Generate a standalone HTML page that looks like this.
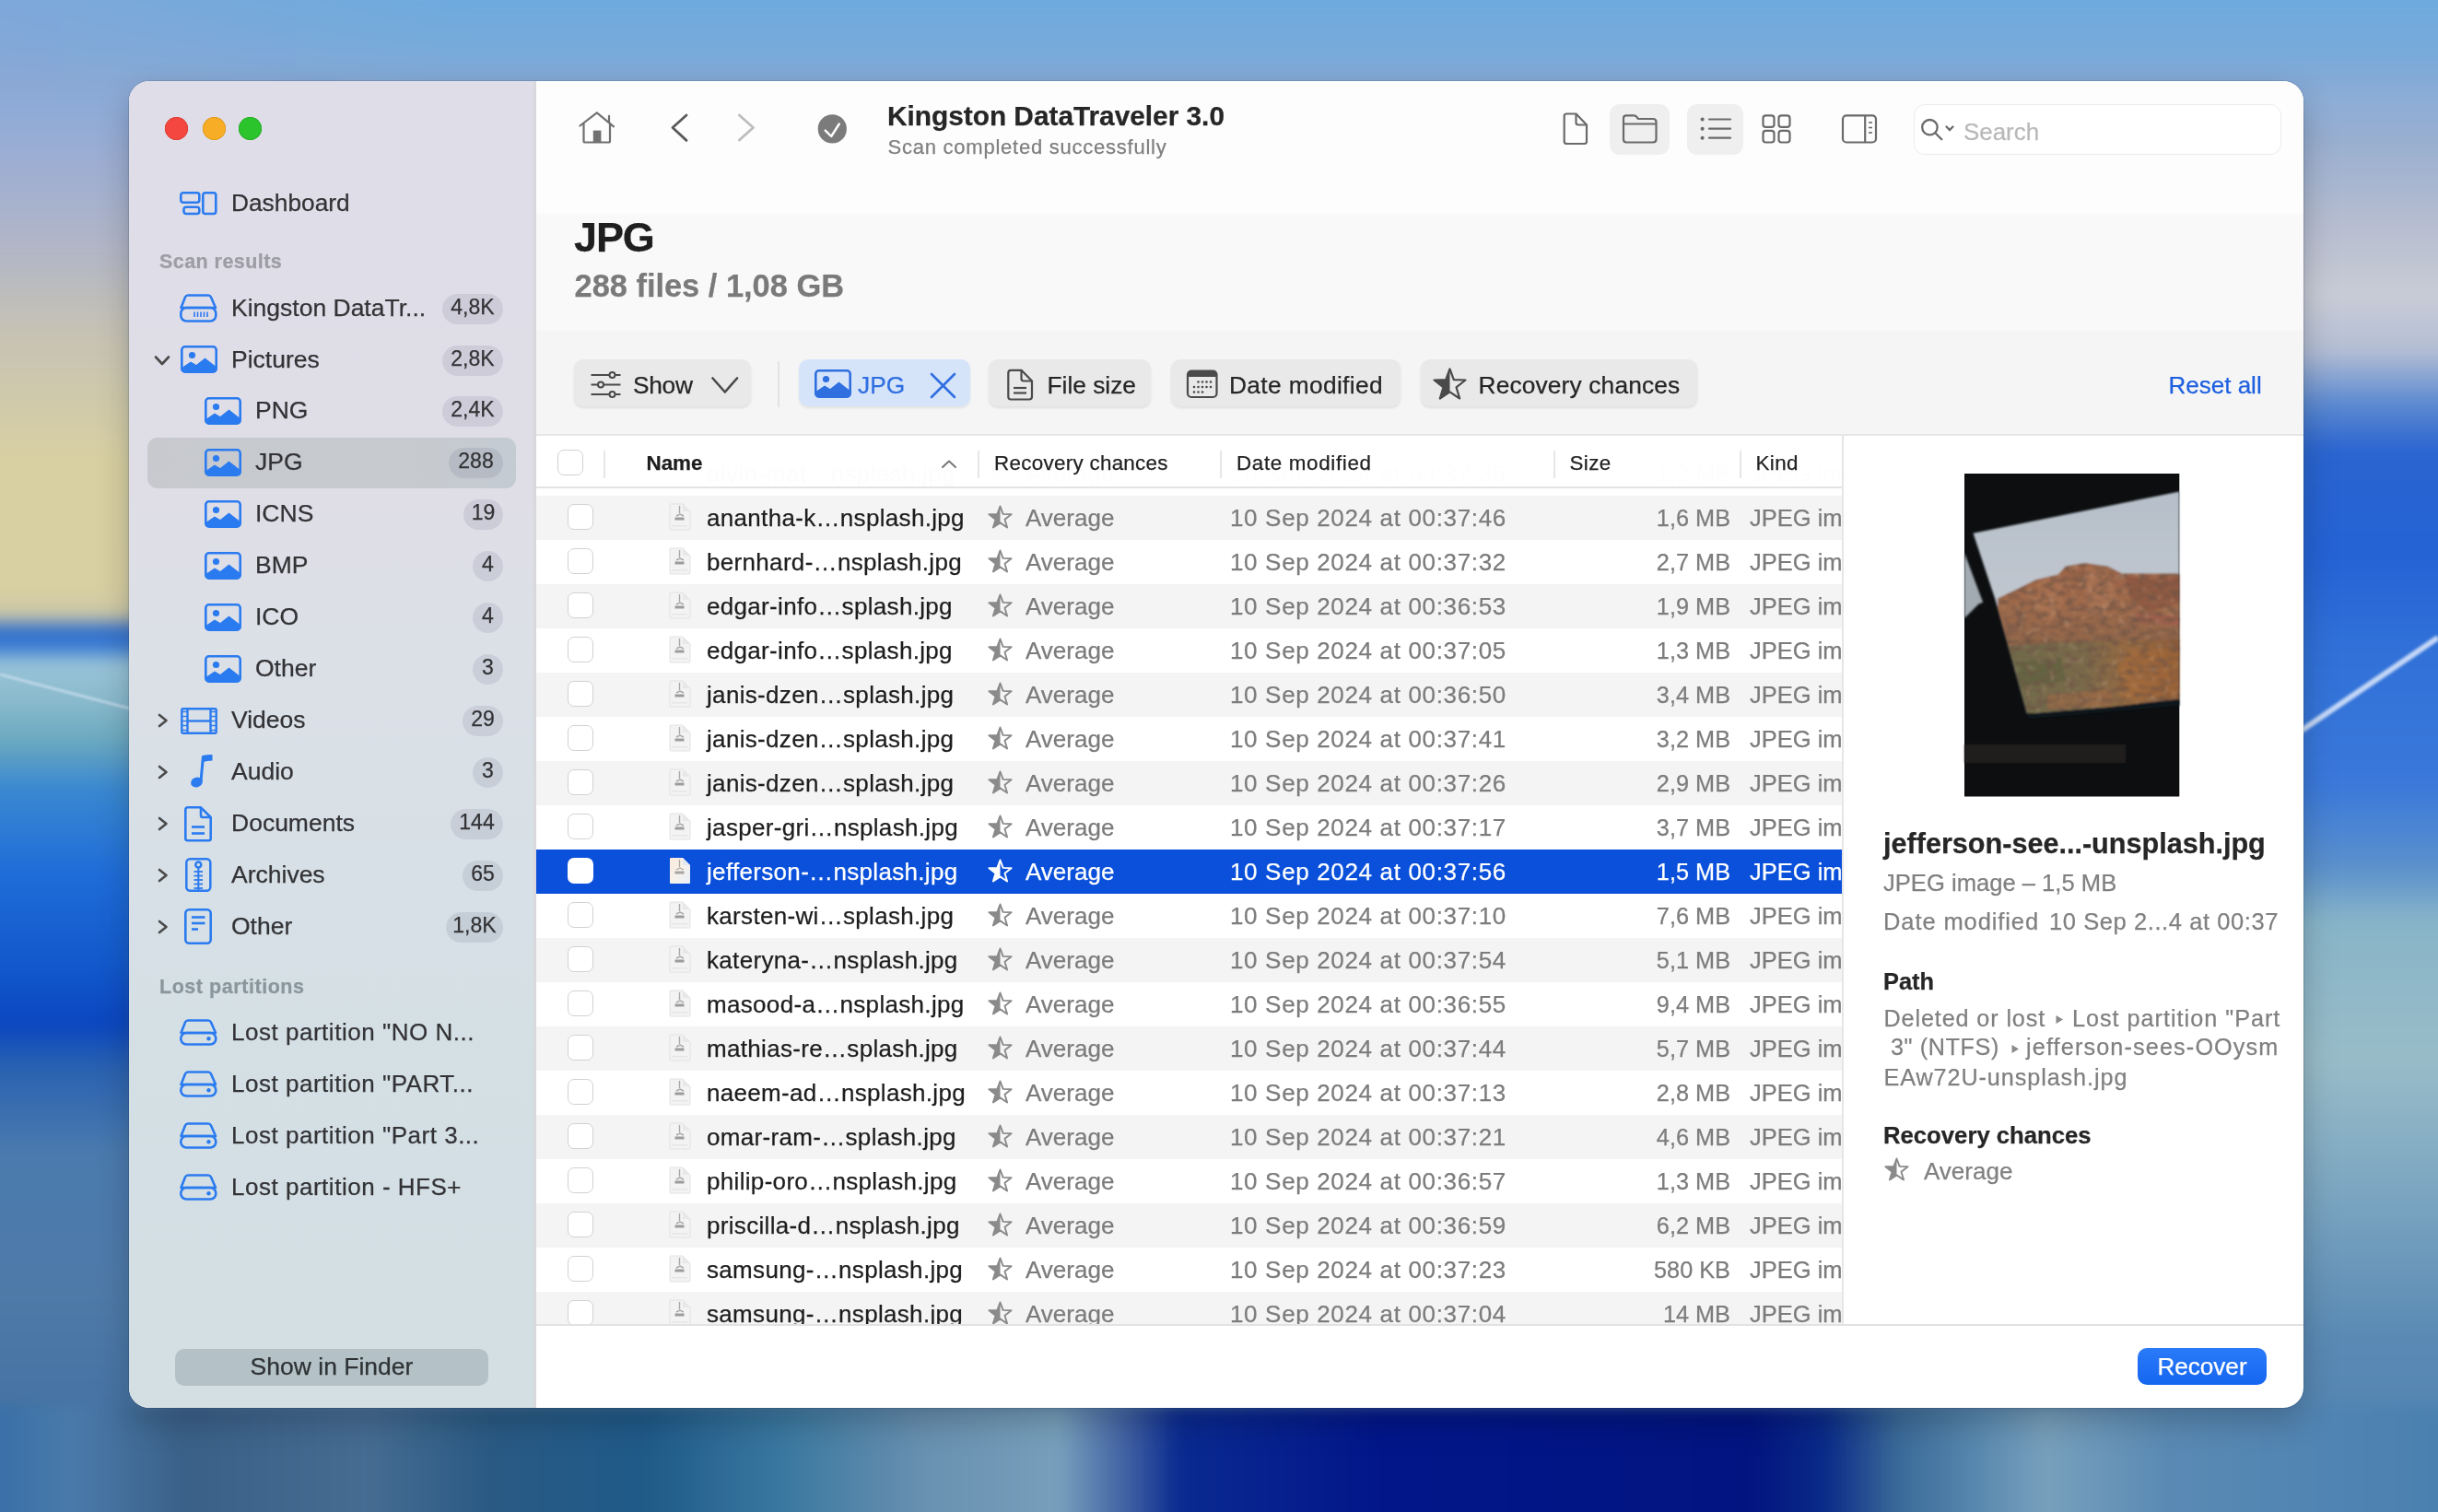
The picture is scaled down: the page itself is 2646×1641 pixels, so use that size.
<!DOCTYPE html>
<html><head><meta charset="utf-8">
<style>
html,body{margin:0;padding:0;width:2646px;height:1641px;overflow:hidden;}
body{position:relative;font-family:"Liberation Sans", sans-serif;background:#5a86b8;-webkit-font-smoothing:antialiased;}
.t{-webkit-text-stroke:0.25px currentColor;}
.b{position:absolute;}
.t{position:absolute;white-space:pre;}
svg.b{overflow:visible}
</style></head><body><div style="position:absolute;left:0;top:0;width:2646px;height:1641px;will-change:transform;">
<div class="b" style="left:-200px;top:-200px;width:3046px;height:2041px;filter:blur(8px);overflow:hidden;">
<div class="b" style="left:0px;top:0px;width:3046px;height:2041px;background:#5a86b8;"></div>
<div class="b" style="left:0px;top:0px;width:3046px;height:330px;background:linear-gradient(180deg,#6eaae0 0px,#6eaade 200px,#76aadb 250px,#88aad4 300px,#8ea8cc 330px);"></div>
<div class="b" style="left:0px;top:0px;width:700px;height:330px;background:linear-gradient(90deg,rgba(150,165,210,0.55),rgba(150,165,210,0));"></div>
<div class="b" style="left:0px;top:300px;width:350px;height:1541px;background:linear-gradient(180deg,#8aaad8 0px,#9eaed2 80px,#b2b6c6 170px,#c6c2b4 260px,#d8d0a2 400px,#d8cfa2 540px,#cbc6a6 568px,#2e6ccc 584px,#3a7cd4 602px,#9ac4d8 620px,#8abacc 660px,#6aa8c0 705px,#3a88d0 755px,#1e6cd8 850px,#1258cc 950px,#0a46c0 1010px,#2a62b0 1060px,#4a7aae 1150px,#4e7aa8 1300px,#3e6c9e 1541px);"></div>
<div class="b" style="left:2690px;top:300px;width:356px;height:1541px;background:linear-gradient(180deg,#8aaed8 0px,#98aed0 50px,#b8bed0 150px,#c8ccd6 220px,#b4bed4 280px,#5a88d0 340px,#2a64d0 390px,#2462d4 500px,#3070d8 600px,#3a78da 750px,#5a90cc 840px,#88b4c8 900px,#98bcc8 1050px,#7aa4c0 1200px,#5a8ab4 1350px,#4e80ae 1541px);"></div>
<div class="b" style="left:0px;top:1725px;width:3046px;height:316px;background:linear-gradient(90deg,#3a70a8 0px,#3a70a8 200px,#4a7aaa 280px,#3a6088 400px,#466c92 600px,#2a5a84 730px,#1f5a88 900px,#3a78a0 1050px,#6890b0 1200px,#78a0bc 1350px,#3a5aa0 1430px,#0a2a90 1480px,#02168a 1700px,#021480 2100px,#0a2a88 2180px,#3a6a98 2260px,#5a8ab0 2350px,#78a0bc 2420px,#5a8ab4 2550px,#4a80b0 2846px);"></div>
</div>
<svg class="b" style="left:2480px;top:640px;" width="166" height="200" viewBox="0 0 166 200"><line x1="0" y1="165" x2="166" y2="52" stroke="rgba(235,242,255,0.8)" stroke-width="6" style="filter:blur(1.5px)"/></svg>
<svg class="b" style="left:0px;top:700px;" width="160" height="100" viewBox="0 0 160 100"><line x1="0" y1="32" x2="160" y2="74" stroke="rgba(220,235,250,0.55)" stroke-width="3" style="filter:blur(1px)"/></svg>
<div class="b" style="left:140px;top:88px;width:2360px;height:1440px;border-radius:22px;box-shadow:0 14px 36px rgba(0,0,0,0.22),0 0 0 1px rgba(0,0,0,0.10);"></div>
<div class="b" style="left:140px;top:88px;width:2360px;height:1440px;border-radius:22px;background:#ffffff;overflow:hidden;"></div>
<div class="b" style="left:140px;top:88px;width:442px;height:1440px;border-top-left-radius:22px;border-bottom-left-radius:22px;background:linear-gradient(180deg,#dfdde8 0px,#dfdee7 450px,#dbe0e7 650px,#d6e0e6 900px,#d3dfe4 1200px,#d3dfe3 1440px);"></div>
<div class="b" style="left:579px;top:88px;width:3px;height:1440px;background:#d9d9dd;"></div>
<div class="b" style="left:179.3px;top:127.0px;width:25px;height:25px;border-radius:50%;background:#f4473f;box-shadow:inset 0 0 0 0.8px #d83a33;"></div>
<div class="b" style="left:219.5px;top:127.0px;width:25px;height:25px;border-radius:50%;background:#f7ad25;box-shadow:inset 0 0 0 0.8px #dc961c;"></div>
<div class="b" style="left:259.3px;top:127.0px;width:25px;height:25px;border-radius:50%;background:#2cc42c;box-shadow:inset 0 0 0 0.8px #22a824;"></div>
<svg class="b" style="left:195px;top:208px;" width="41" height="25" viewBox="0 0 41 25"><g fill="none" stroke="#2b7bf0" stroke-width="2.6">
<rect x="1.3" y="1.3" width="20" height="10.5" rx="2.5"/>
<rect x="4.5" y="16.8" width="16.8" height="7.2" rx="2.5"/>
<rect x="25.3" y="1.3" width="14" height="22.7" rx="2.5"/></g></svg>
<div class="t " style="left:251px;top:205.80px;font-size:26.3px;line-height:29.38px;color:#333336;">Dashboard</div>
<div class="t " style="left:173px;top:272.14px;font-size:21.5px;line-height:24.02px;color:#9d9da6;font-weight:bold;letter-spacing:0.45px;">Scan results</div>
<div class="b" style="left:160px;top:475px;width:400px;height:55px;border-radius:11px;background:linear-gradient(90deg,#c7c9ce 0%,#c6cacf 80%,#c3cbd3 100%);"></div>
<svg class="b" style="left:195px;top:318px;" width="41" height="32" viewBox="0 0 41 32"><g fill="none" stroke="#2b7bf0" stroke-width="2.6" stroke-linejoin="round">
<path d="M9 2.5 H31 Q33 2.5 34 4.5 L39 16 H1.5 L6 4.5 Q7 2.5 9 2.5 Z"/>
<rect x="1.3" y="16" width="38" height="14.5" rx="6"/></g>
<g stroke="#2b7bf0" stroke-width="1.6"><line x1="16" y1="20.5" x2="16" y2="26"/><line x1="19.5" y1="20.5" x2="19.5" y2="26"/><line x1="23" y1="20.5" x2="23" y2="26"/><line x1="26.5" y1="20.5" x2="26.5" y2="26"/><line x1="30" y1="20.5" x2="30" y2="26"/></g></svg>
<div class="t " style="left:251px;top:320.32px;font-size:26.5px;line-height:29.60px;color:#333336;">Kingston DataTr...</div>
<div class="b" style="left:480px;top:319.0px;width:66px;height:33px;border-radius:16.5px;background:rgba(60,60,90,0.105);"></div>
<div class="t " style="left:480px;top:320.99px;font-size:23px;line-height:25.69px;color:#333336;width:66px;text-align:center;">4,8K</div>
<svg class="b" style="left:167px;top:385px;" width="18" height="13" viewBox="0 0 18 13"><path d="M2 2.5 L9 10 L16 2.5" fill="none" stroke="#4a4a4a" stroke-width="2.6" stroke-linecap="round" stroke-linejoin="round"/></svg>
<svg class="b" style="left:196px;top:375px;" width="40" height="30" viewBox="0 0 40 30"><rect x="1.3" y="1.3" width="37.4" height="27.4" rx="3.5" fill="none" stroke="#2b7bf0" stroke-width="2.6"/>
<circle cx="12.5" cy="10.5" r="3.6" fill="#2b7bf0"/>
<path d="M1.3 24 L11 17.5 L17 21 L26.5 13.5 L38.7 23 V26 Q38.7 28.7 36 28.7 H4 Q1.3 28.7 1.3 26 Z" fill="#2b7bf0"/></svg>
<div class="t " style="left:251px;top:376.32px;font-size:26.5px;line-height:29.60px;color:#333336;">Pictures</div>
<div class="b" style="left:480px;top:375.0px;width:66px;height:33px;border-radius:16.5px;background:rgba(60,60,90,0.105);"></div>
<div class="t " style="left:480px;top:376.99px;font-size:23px;line-height:25.69px;color:#333336;width:66px;text-align:center;">2,8K</div>
<svg class="b" style="left:222px;top:431px;" width="40" height="30" viewBox="0 0 40 30"><rect x="1.3" y="1.3" width="37.4" height="27.4" rx="3.5" fill="none" stroke="#2b7bf0" stroke-width="2.6"/>
<circle cx="12.5" cy="10.5" r="3.6" fill="#2b7bf0"/>
<path d="M1.3 24 L11 17.5 L17 21 L26.5 13.5 L38.7 23 V26 Q38.7 28.7 36 28.7 H4 Q1.3 28.7 1.3 26 Z" fill="#2b7bf0"/></svg>
<div class="t " style="left:277px;top:431.32px;font-size:26.5px;line-height:29.60px;color:#333336;">PNG</div>
<div class="b" style="left:480px;top:430.0px;width:66px;height:33px;border-radius:16.5px;background:rgba(60,60,90,0.105);"></div>
<div class="t " style="left:480px;top:431.99px;font-size:23px;line-height:25.69px;color:#333336;width:66px;text-align:center;">2,4K</div>
<svg class="b" style="left:222px;top:487px;" width="40" height="30" viewBox="0 0 40 30"><rect x="1.3" y="1.3" width="37.4" height="27.4" rx="3.5" fill="none" stroke="#2b7bf0" stroke-width="2.6"/>
<circle cx="12.5" cy="10.5" r="3.6" fill="#2b7bf0"/>
<path d="M1.3 24 L11 17.5 L17 21 L26.5 13.5 L38.7 23 V26 Q38.7 28.7 36 28.7 H4 Q1.3 28.7 1.3 26 Z" fill="#2b7bf0"/></svg>
<div class="t " style="left:277px;top:487.32px;font-size:26.5px;line-height:29.60px;color:#333336;">JPG</div>
<div class="b" style="left:487px;top:486.0px;width:59px;height:33px;border-radius:16.5px;background:rgba(60,60,90,0.105);"></div>
<div class="t " style="left:487px;top:487.99px;font-size:23px;line-height:25.69px;color:#333336;width:59px;text-align:center;">288</div>
<svg class="b" style="left:222px;top:543px;" width="40" height="30" viewBox="0 0 40 30"><rect x="1.3" y="1.3" width="37.4" height="27.4" rx="3.5" fill="none" stroke="#2b7bf0" stroke-width="2.6"/>
<circle cx="12.5" cy="10.5" r="3.6" fill="#2b7bf0"/>
<path d="M1.3 24 L11 17.5 L17 21 L26.5 13.5 L38.7 23 V26 Q38.7 28.7 36 28.7 H4 Q1.3 28.7 1.3 26 Z" fill="#2b7bf0"/></svg>
<div class="t " style="left:277px;top:543.32px;font-size:26.5px;line-height:29.60px;color:#333336;">ICNS</div>
<div class="b" style="left:503px;top:542.0px;width:43px;height:33px;border-radius:16.5px;background:rgba(60,60,90,0.105);"></div>
<div class="t " style="left:503px;top:543.98px;font-size:23px;line-height:25.69px;color:#333336;width:43px;text-align:center;">19</div>
<svg class="b" style="left:222px;top:599px;" width="40" height="30" viewBox="0 0 40 30"><rect x="1.3" y="1.3" width="37.4" height="27.4" rx="3.5" fill="none" stroke="#2b7bf0" stroke-width="2.6"/>
<circle cx="12.5" cy="10.5" r="3.6" fill="#2b7bf0"/>
<path d="M1.3 24 L11 17.5 L17 21 L26.5 13.5 L38.7 23 V26 Q38.7 28.7 36 28.7 H4 Q1.3 28.7 1.3 26 Z" fill="#2b7bf0"/></svg>
<div class="t " style="left:277px;top:599.32px;font-size:26.5px;line-height:29.60px;color:#333336;">BMP</div>
<div class="b" style="left:513px;top:598.0px;width:33px;height:33px;border-radius:16.5px;background:rgba(60,60,90,0.105);"></div>
<div class="t " style="left:513px;top:599.98px;font-size:23px;line-height:25.69px;color:#333336;width:33px;text-align:center;">4</div>
<svg class="b" style="left:222px;top:655px;" width="40" height="30" viewBox="0 0 40 30"><rect x="1.3" y="1.3" width="37.4" height="27.4" rx="3.5" fill="none" stroke="#2b7bf0" stroke-width="2.6"/>
<circle cx="12.5" cy="10.5" r="3.6" fill="#2b7bf0"/>
<path d="M1.3 24 L11 17.5 L17 21 L26.5 13.5 L38.7 23 V26 Q38.7 28.7 36 28.7 H4 Q1.3 28.7 1.3 26 Z" fill="#2b7bf0"/></svg>
<div class="t " style="left:277px;top:655.32px;font-size:26.5px;line-height:29.60px;color:#333336;">ICO</div>
<div class="b" style="left:513px;top:654.0px;width:33px;height:33px;border-radius:16.5px;background:rgba(60,60,90,0.105);"></div>
<div class="t " style="left:513px;top:655.98px;font-size:23px;line-height:25.69px;color:#333336;width:33px;text-align:center;">4</div>
<svg class="b" style="left:222px;top:711px;" width="40" height="30" viewBox="0 0 40 30"><rect x="1.3" y="1.3" width="37.4" height="27.4" rx="3.5" fill="none" stroke="#2b7bf0" stroke-width="2.6"/>
<circle cx="12.5" cy="10.5" r="3.6" fill="#2b7bf0"/>
<path d="M1.3 24 L11 17.5 L17 21 L26.5 13.5 L38.7 23 V26 Q38.7 28.7 36 28.7 H4 Q1.3 28.7 1.3 26 Z" fill="#2b7bf0"/></svg>
<div class="t " style="left:277px;top:711.32px;font-size:26.5px;line-height:29.60px;color:#333336;">Other</div>
<div class="b" style="left:513px;top:710.0px;width:33px;height:33px;border-radius:16.5px;background:rgba(60,60,90,0.105);"></div>
<div class="t " style="left:513px;top:711.98px;font-size:23px;line-height:25.69px;color:#333336;width:33px;text-align:center;">3</div>
<svg class="b" style="left:170px;top:774px;" width="14" height="16" viewBox="0 0 14 16"><path d="M3 2 L10.5 8 L3 14" fill="none" stroke="#4a4a4a" stroke-width="2.6" stroke-linecap="round" stroke-linejoin="round"/></svg>
<svg class="b" style="left:196px;top:768px;" width="40" height="29" viewBox="0 0 40 29"><g fill="none" stroke="#2b7bf0" stroke-width="2.4">
<rect x="1.3" y="1.3" width="37.4" height="26.4" rx="1.5"/>
<line x1="7.5" y1="1.3" x2="7.5" y2="27.7"/><line x1="32.5" y1="1.3" x2="32.5" y2="27.7"/>
<line x1="7.5" y1="14.5" x2="32.5" y2="14.5"/></g><g stroke="#2b7bf0" stroke-width="1.4"><line x1="1.3" y1="4.5" x2="7.5" y2="4.5"/><line x1="32.5" y1="4.5" x2="38.7" y2="4.5"/><line x1="1.3" y1="9.5" x2="7.5" y2="9.5"/><line x1="32.5" y1="9.5" x2="38.7" y2="9.5"/><line x1="1.3" y1="14.5" x2="7.5" y2="14.5"/><line x1="32.5" y1="14.5" x2="38.7" y2="14.5"/><line x1="1.3" y1="19.5" x2="7.5" y2="19.5"/><line x1="32.5" y1="19.5" x2="38.7" y2="19.5"/><line x1="1.3" y1="24.5" x2="7.5" y2="24.5"/><line x1="32.5" y1="24.5" x2="38.7" y2="24.5"/></g></svg>
<div class="t " style="left:251px;top:767.32px;font-size:26.5px;line-height:29.60px;color:#333336;">Videos</div>
<div class="b" style="left:502px;top:766.0px;width:44px;height:33px;border-radius:16.5px;background:rgba(60,60,90,0.105);"></div>
<div class="t " style="left:502px;top:767.98px;font-size:23px;line-height:25.69px;color:#333336;width:44px;text-align:center;">29</div>
<svg class="b" style="left:170px;top:830px;" width="14" height="16" viewBox="0 0 14 16"><path d="M3 2 L10.5 8 L3 14" fill="none" stroke="#4a4a4a" stroke-width="2.6" stroke-linecap="round" stroke-linejoin="round"/></svg>
<svg class="b" style="left:206px;top:818px;" width="26" height="37" viewBox="0 0 26 37"><path d="M14.5 2.5 L12 30" stroke="#2b7bf0" stroke-width="3" fill="none"/>
<path d="M13.8 2 Q20 0.5 24.5 1 L24.5 7.5 Q19 7.5 14 9 Z" fill="#2b7bf0"/>
<ellipse cx="7.5" cy="31" rx="6.5" ry="5.2" fill="#2b7bf0" transform="rotate(-20 7.5 31)"/></svg>
<div class="t " style="left:251px;top:823.32px;font-size:26.5px;line-height:29.60px;color:#333336;">Audio</div>
<div class="b" style="left:513px;top:822.0px;width:33px;height:33px;border-radius:16.5px;background:rgba(60,60,90,0.105);"></div>
<div class="t " style="left:513px;top:823.98px;font-size:23px;line-height:25.69px;color:#333336;width:33px;text-align:center;">3</div>
<svg class="b" style="left:170px;top:886px;" width="14" height="16" viewBox="0 0 14 16"><path d="M3 2 L10.5 8 L3 14" fill="none" stroke="#4a4a4a" stroke-width="2.6" stroke-linecap="round" stroke-linejoin="round"/></svg>
<svg class="b" style="left:200px;top:874.5px;" width="30" height="39" viewBox="0 0 30 39"><g fill="none" stroke="#2b7bf0" stroke-width="2.6" stroke-linejoin="round">
<path d="M4 1.3 H18 L28.7 12 V35 Q28.7 37.3 26.5 37.3 H4 Q1.3 37.3 1.3 35 V4 Q1.3 1.3 4 1.3 Z"/>
<path d="M18 1.3 V10 Q18 12 20 12 H28.7"/>
<line x1="8" y1="22.5" x2="22" y2="22.5"/><line x1="8" y1="29.5" x2="22" y2="29.5"/></g></svg>
<div class="t " style="left:251px;top:879.32px;font-size:26.5px;line-height:29.60px;color:#333336;">Documents</div>
<div class="b" style="left:489px;top:878.0px;width:57px;height:33px;border-radius:16.5px;background:rgba(60,60,90,0.105);"></div>
<div class="t " style="left:489px;top:879.98px;font-size:23px;line-height:25.69px;color:#333336;width:57px;text-align:center;">144</div>
<svg class="b" style="left:170px;top:942px;" width="14" height="16" viewBox="0 0 14 16"><path d="M3 2 L10.5 8 L3 14" fill="none" stroke="#4a4a4a" stroke-width="2.6" stroke-linecap="round" stroke-linejoin="round"/></svg>
<svg class="b" style="left:201px;top:930.5px;" width="29" height="37" viewBox="0 0 29 37"><g fill="none" stroke="#2b7bf0" stroke-width="2.5">
<rect x="1.3" y="1.3" width="26" height="34.5" rx="4"/>
<circle cx="14.3" cy="7.5" r="3"/>
<line x1="14.3" y1="10.5" x2="14.3" y2="35.5" stroke-width="2"/></g>
<g stroke="#2b7bf0" stroke-width="1.8"><line x1="9.5" y1="15" x2="19" y2="15"/><line x1="9.5" y1="19.5" x2="19" y2="19.5"/><line x1="9.5" y1="24" x2="19" y2="24"/><line x1="9.5" y1="28.5" x2="19" y2="28.5"/><line x1="9.5" y1="33" x2="19" y2="33"/></g></svg>
<div class="t " style="left:251px;top:935.32px;font-size:26.5px;line-height:29.60px;color:#333336;">Archives</div>
<div class="b" style="left:502px;top:934.0px;width:44px;height:33px;border-radius:16.5px;background:rgba(60,60,90,0.105);"></div>
<div class="t " style="left:502px;top:935.98px;font-size:23px;line-height:25.69px;color:#333336;width:44px;text-align:center;">65</div>
<svg class="b" style="left:170px;top:998px;" width="14" height="16" viewBox="0 0 14 16"><path d="M3 2 L10.5 8 L3 14" fill="none" stroke="#4a4a4a" stroke-width="2.6" stroke-linecap="round" stroke-linejoin="round"/></svg>
<svg class="b" style="left:200px;top:986px;" width="30" height="39" viewBox="0 0 30 39"><g fill="none" stroke="#2b7bf0" stroke-width="2.6">
<rect x="1.3" y="1.3" width="27.4" height="36.4" rx="4"/>
<line x1="8" y1="9.5" x2="22.5" y2="9.5"/><line x1="8" y1="16" x2="22.5" y2="16"/><line x1="8" y1="22.5" x2="15" y2="22.5"/></g></svg>
<div class="t " style="left:251px;top:991.32px;font-size:26.5px;line-height:29.60px;color:#333336;">Other</div>
<div class="b" style="left:484px;top:990.0px;width:62px;height:33px;border-radius:16.5px;background:rgba(60,60,90,0.105);"></div>
<div class="t " style="left:484px;top:991.98px;font-size:23px;line-height:25.69px;color:#333336;width:62px;text-align:center;">1,8K</div>
<div class="t " style="left:173px;top:1058.54px;font-size:21.5px;line-height:24.02px;color:#8a969c;font-weight:bold;letter-spacing:0.55px;">Lost partitions</div>
<svg class="b" style="left:195px;top:1105px;" width="41" height="30" viewBox="0 0 41 30"><g fill="none" stroke="#2b7bf0" stroke-width="2.6" stroke-linejoin="round">
<path d="M9 2.5 H31 Q33 2.5 34 4.5 L39 16 H1.5 L6 4.5 Q7 2.5 9 2.5 Z"/>
<rect x="1.3" y="16" width="38" height="12.5" rx="6"/></g>
<circle cx="31.5" cy="22.3" r="2.2" fill="#2b7bf0"/></svg>
<div class="t " style="left:251px;top:1106.27px;font-size:26px;line-height:29.04px;color:#333336;letter-spacing:0.52px;">Lost partition "NO N...</div>
<svg class="b" style="left:195px;top:1161px;" width="41" height="30" viewBox="0 0 41 30"><g fill="none" stroke="#2b7bf0" stroke-width="2.6" stroke-linejoin="round">
<path d="M9 2.5 H31 Q33 2.5 34 4.5 L39 16 H1.5 L6 4.5 Q7 2.5 9 2.5 Z"/>
<rect x="1.3" y="16" width="38" height="12.5" rx="6"/></g>
<circle cx="31.5" cy="22.3" r="2.2" fill="#2b7bf0"/></svg>
<div class="t " style="left:251px;top:1162.27px;font-size:26px;line-height:29.04px;color:#333336;letter-spacing:0.52px;">Lost partition "PART...</div>
<svg class="b" style="left:195px;top:1217px;" width="41" height="30" viewBox="0 0 41 30"><g fill="none" stroke="#2b7bf0" stroke-width="2.6" stroke-linejoin="round">
<path d="M9 2.5 H31 Q33 2.5 34 4.5 L39 16 H1.5 L6 4.5 Q7 2.5 9 2.5 Z"/>
<rect x="1.3" y="16" width="38" height="12.5" rx="6"/></g>
<circle cx="31.5" cy="22.3" r="2.2" fill="#2b7bf0"/></svg>
<div class="t " style="left:251px;top:1218.27px;font-size:26px;line-height:29.04px;color:#333336;letter-spacing:0.52px;">Lost partition "Part 3...</div>
<svg class="b" style="left:195px;top:1273px;" width="41" height="30" viewBox="0 0 41 30"><g fill="none" stroke="#2b7bf0" stroke-width="2.6" stroke-linejoin="round">
<path d="M9 2.5 H31 Q33 2.5 34 4.5 L39 16 H1.5 L6 4.5 Q7 2.5 9 2.5 Z"/>
<rect x="1.3" y="16" width="38" height="12.5" rx="6"/></g>
<circle cx="31.5" cy="22.3" r="2.2" fill="#2b7bf0"/></svg>
<div class="t " style="left:251px;top:1274.27px;font-size:26px;line-height:29.04px;color:#333336;letter-spacing:0.52px;">Lost partition - HFS+</div>
<div class="b" style="left:190px;top:1464px;width:340px;height:40px;border-radius:10px;background:rgba(100,120,130,0.28);"></div>
<div class="t" style="left:190px;top:1462.8px;width:340px;height:40px;line-height:40px;text-align:center;font-size:26.5px;color:#2e3234;">Show in Finder</div>
<div class="b" style="left:582px;top:88px;width:1918px;height:144px;background:#fdfdfd;border-top-right-radius:22px;"></div>
<svg class="b" style="left:626px;top:118px;" width="44" height="40" viewBox="0 0 44 40"><g fill="none" stroke="#707070" stroke-width="2.2" stroke-linejoin="round" stroke-linecap="round">
<path d="M3.5 18.5 L21.8 4.3 L40 19.3"/><path d="M7.5 16 V35 Q7.5 36.5 9 36.5 H34.5 Q36 36.5 36 35 V16"/><line x1="35" y1="7.8" x2="35" y2="14.5"/></g>
<rect x="17.8" y="23.6" width="8.6" height="13" fill="#707070"/></svg>
<svg class="b" style="left:724px;top:120px;" width="26" height="38" viewBox="0 0 26 38"><path d="M21 5 L6 18.5 L21 32.4" fill="none" stroke="#5a5a5a" stroke-width="2.8" stroke-linecap="round" stroke-linejoin="round"/></svg>
<svg class="b" style="left:798px;top:120px;" width="26" height="38" viewBox="0 0 26 38"><path d="M4.4 5 L19.5 18.5 L4.4 32" fill="none" stroke="#bdbdbd" stroke-width="2.8" stroke-linecap="round" stroke-linejoin="round"/></svg>
<svg class="b" style="left:886px;top:123px;" width="35" height="35" viewBox="0 0 35 35"><circle cx="17.3" cy="16.9" r="15.6" fill="#7b7b7b"/><path d="M9.7 18.6 L16.2 25 L24.8 11.5" fill="none" stroke="#fff" stroke-width="2.4" stroke-linecap="round" stroke-linejoin="round"/></svg>
<div class="t " style="left:963px;top:108.83px;font-size:29.8px;line-height:33.29px;color:#262626;font-weight:bold;">Kingston DataTraveler 3.0</div>
<div class="t " style="left:963.5px;top:147.89px;font-size:22px;line-height:24.57px;color:#7f7f7f;letter-spacing:0.76px;">Scan completed successfully</div>
<svg class="b" style="left:1696px;top:122px;" width="28" height="36" viewBox="0 0 28 36"><g fill="none" stroke="#6a6a6a" stroke-width="2.2" stroke-linejoin="round"><path d="M4.5 1.5 H14.5 L26 13.5 V31.5 Q26 34 23.5 34 H4.5 Q1.7 34 1.7 31.5 V4 Q1.7 1.5 4.5 1.5 Z"/><path d="M14.5 1.5 V11 Q14.5 13.5 17 13.5 H26"/></g></svg>
<div class="b" style="left:1747px;top:112.5px;width:65px;height:55.5px;border-radius:11px;background:#efefef;"></div>
<svg class="b" style="left:1760px;top:123px;" width="40" height="34" viewBox="0 0 40 34"><g fill="none" stroke="#6a6a6a" stroke-width="2.2" stroke-linejoin="round"><path d="M5 2.3 H13.5 Q15 2.3 16 3.5 L18 6 H34 Q37.5 6 37.5 9.5 V28 Q37.5 31.5 34 31.5 H5 Q2 31.5 2 28 V5.5 Q2 2.3 5 2.3 Z"/><line x1="2" y1="11.5" x2="37.5" y2="11.5"/></g></svg>
<div class="b" style="left:1830.5px;top:112.5px;width:61px;height:55.5px;border-radius:11px;background:#efefef;"></div>
<svg class="b" style="left:1844px;top:124px;" width="38" height="32" viewBox="0 0 38 32"><g fill="#6a6a6a"><circle cx="3.6" cy="5.5" r="2"/><circle cx="3.6" cy="15.7" r="2"/><circle cx="3.6" cy="25.7" r="2"/></g><g stroke="#6a6a6a" stroke-width="2.2" stroke-linecap="round"><line x1="11" y1="5.5" x2="34" y2="5.5"/><line x1="11" y1="15.7" x2="34" y2="15.7"/><line x1="11" y1="25.7" x2="34" y2="25.7"/></g></svg>
<svg class="b" style="left:1911px;top:123px;" width="34" height="34" viewBox="0 0 34 34"><g fill="none" stroke="#6a6a6a" stroke-width="2.2"><rect x="2.5" y="2.3" width="12" height="12.6" rx="3"/><rect x="19.5" y="2.3" width="12" height="12.6" rx="3"/><rect x="2.5" y="18.9" width="12" height="12.6" rx="3"/><rect x="19.5" y="18.9" width="12" height="12.6" rx="3"/></g></svg>
<svg class="b" style="left:1998px;top:123px;" width="40" height="34" viewBox="0 0 40 34"><g fill="none" stroke="#6a6a6a" stroke-width="2.2"><rect x="2" y="2.3" width="36" height="29.2" rx="4"/><line x1="26.2" y1="2.3" x2="26.2" y2="31.5"/></g><g stroke="#6a6a6a" stroke-width="1.6"><line x1="30" y1="10" x2="34" y2="10"/><line x1="30" y1="15.5" x2="34" y2="15.5"/><line x1="30" y1="21" x2="34" y2="21"/></g></svg>
<div class="b" style="left:2076.5px;top:112.5px;width:399.5px;height:55.5px;box-sizing:border-box;border-radius:12px;background:#fff;border:1.5px solid #ececec;"></div>
<svg class="b" style="left:2083px;top:126px;" width="42" height="30" viewBox="0 0 42 30"><g fill="none" stroke="#6a6a6a" stroke-width="2.3" stroke-linecap="round"><circle cx="11.4" cy="12.2" r="8.2"/><line x1="17.5" y1="18.5" x2="24.3" y2="25.3"/><path d="M29.5 11.5 L33 15 L36.5 11.5"/></g></svg>
<div class="t " style="left:2131px;top:129.26px;font-size:25.9px;line-height:28.93px;color:#b9b9b9;">Search</div>
<div class="b" style="left:582px;top:232px;width:1918px;height:127px;background:#f9f9f9;"></div>
<div class="b" style="left:582px;top:359px;width:1918px;height:112px;background:#f5f5f5;"></div>
<div class="b" style="left:582px;top:470.5px;width:1918px;height:2.5px;background:#e6e6e6;"></div>
<div class="t " style="left:623px;top:232.88px;font-size:45px;line-height:50.27px;color:#1f1f1f;font-weight:bold;letter-spacing:-1.1px;">JPG</div>
<div class="t " style="left:623.5px;top:290.87px;font-size:34.4px;line-height:38.42px;color:#7a7a7a;font-weight:bold;">288 files / 1,08 GB</div>
<div class="b" style="left:622.5px;top:390px;width:192.5px;height:51px;border-radius:10px;background:#e9e9e9;box-shadow:0 2px 3px rgba(0,0,0,0.09);"></div>
<svg class="b" style="left:639px;top:400px;" width="38" height="36" viewBox="0 0 38 36"><g stroke="#4a4a4a" stroke-width="2" fill="none"><line x1="2.5" y1="7" x2="34.5" y2="7"/><line x1="2.5" y1="17.5" x2="34.5" y2="17.5"/><line x1="2.5" y1="28" x2="34.5" y2="28"/><circle cx="25.5" cy="7" r="3" fill="#e9e9e9"/><circle cx="13" cy="17.5" r="3" fill="#e9e9e9"/><circle cx="25.5" cy="28" r="3" fill="#e9e9e9"/></g></svg>
<div class="t " style="left:687px;top:403.80px;font-size:26.3px;line-height:29.38px;color:#262626;letter-spacing:-0.3px;">Show</div>
<svg class="b" style="left:770px;top:405px;" width="34" height="26" viewBox="0 0 34 26"><path d="M3.5 5.5 L16.8 20.5 L30 5.5" fill="none" stroke="#4a4a4a" stroke-width="2.6" stroke-linecap="round" stroke-linejoin="round"/></svg>
<div class="b" style="left:843.5px;top:392px;width:2px;height:50px;background:#e2e2e2;"></div>
<div class="b" style="left:867px;top:390px;width:186px;height:51px;border-radius:10px;background:#d6e4fa;box-shadow:0 2px 3px rgba(0,0,0,0.08);"></div>
<svg class="b" style="left:884px;top:401px;" width="40" height="32" viewBox="0 0 40 32"><rect x="1.3" y="1.3" width="37.4" height="28.4" rx="3.5" fill="none" stroke="#2f6fe0" stroke-width="2.6"/><circle cx="12.5" cy="10.5" r="3.6" fill="#2f6fe0"/><path d="M1.3 24 L11 17.5 L17 21 L26.5 13.5 L38.7 23 V27 Q38.7 29.7 36 29.7 H4 Q1.3 29.7 1.3 27 Z" fill="#2f6fe0"/></svg>
<div class="t " style="left:931px;top:403.80px;font-size:26.3px;line-height:29.38px;color:#2f6fe0;">JPG</div>
<svg class="b" style="left:1008px;top:403px;" width="31" height="31" viewBox="0 0 31 31"><g stroke="#2f6fe0" stroke-width="2.6" stroke-linecap="round"><line x1="3" y1="3" x2="28" y2="28"/><line x1="28" y1="3" x2="3" y2="28"/></g></svg>
<div class="b" style="left:1073px;top:390px;width:176px;height:51px;border-radius:10px;background:#e9e9e9;box-shadow:0 2px 3px rgba(0,0,0,0.09);"></div>
<svg class="b" style="left:1092px;top:400px;" width="31" height="36" viewBox="0 0 31 36"><g fill="none" stroke="#4a4a4a" stroke-width="2.2" stroke-linejoin="round"><path d="M5 1.8 H16.5 L28 13.5 V30.5 Q28 33.5 25 33.5 H5 Q2.3 33.5 2.3 30.5 V4.8 Q2.3 1.8 5 1.8 Z"/><path d="M16.5 1.8 V11 Q16.5 13.5 19 13.5 H28"/><line x1="8" y1="21" x2="22" y2="21"/><line x1="8" y1="26.5" x2="22" y2="26.5"/></g></svg>
<div class="t " style="left:1136.5px;top:403.60px;font-size:26.3px;line-height:29.38px;color:#262626;">File size</div>
<div class="b" style="left:1271px;top:390px;width:249px;height:51px;border-radius:10px;background:#e9e9e9;box-shadow:0 2px 3px rgba(0,0,0,0.09);"></div>
<svg class="b" style="left:1287px;top:400px;" width="36" height="34" viewBox="0 0 36 34"><rect x="2" y="2.5" width="31.5" height="28.5" rx="4" fill="none" stroke="#4a4a4a" stroke-width="2.2"/><path d="M2 9 V6 Q2 2.5 6 2.5 H29.5 Q33.5 2.5 33.5 6 V9 Z" fill="#4a4a4a"/><g fill="#4a4a4a"><circle cx="13.5" cy="14.5" r="1.3"/><circle cx="18" cy="14.5" r="1.3"/><circle cx="22.5" cy="14.5" r="1.3"/><circle cx="27" cy="14.5" r="1.3"/><circle cx="9" cy="20" r="1.3"/><circle cx="13.5" cy="20" r="1.3"/><circle cx="18" cy="20" r="1.3"/><circle cx="22.5" cy="20" r="1.3"/><circle cx="27" cy="20" r="1.3"/><circle cx="9" cy="25.5" r="1.3"/><circle cx="13.5" cy="25.5" r="1.3"/><circle cx="18" cy="25.5" r="1.3"/></g></svg>
<div class="t " style="left:1334px;top:403.60px;font-size:26.3px;line-height:29.38px;color:#262626;letter-spacing:0.36px;">Date modified</div>
<div class="b" style="left:1542px;top:390px;width:300px;height:51px;border-radius:10px;background:#e9e9e9;box-shadow:0 2px 3px rgba(0,0,0,0.09);"></div>
<svg class="b" style="left:1554px;top:398px;" width="40" height="38" viewBox="0 0 40 38"><path d="M19.5 2.5 L23.8 14.2 L36.5 14.5 L26.5 22.3 L30.2 34.5 L19.5 27.3 L8.8 34.5 L12.5 22.3 L2.5 14.5 L15.2 14.2 Z" fill="none" stroke="#4a4a4a" stroke-width="2.2" stroke-linejoin="round"/><path d="M19.5 2.5 L15.2 14.2 L2.5 14.5 L12.5 22.3 L8.8 34.5 L19.5 27.3 Z" fill="#4a4a4a"/></svg>
<div class="t " style="left:1604.5px;top:403.60px;font-size:26.3px;line-height:29.38px;color:#262626;letter-spacing:0.16px;">Recovery chances</div>
<div class="t " style="left:2353.5px;top:403.87px;font-size:26px;line-height:29.04px;color:#1e60e0;">Reset all</div>
<div class="b" style="left:582px;top:473px;width:1418px;height:964px;overflow:hidden;background:#fff;">
<div class="b" style="left:0;top:17px;width:1418px;height:48px;background:#ffffff;"></div>
<div class="b" style="left:34px;top:26px;width:28px;height:28px;box-sizing:border-box;border-radius:7px;background:#fff;border:1.6px solid #d2d2d2;"></div>
<svg class="b" style="left:144px;top:25px;" width="24" height="30" viewBox="0 0 24 30"><path d="M2 1 H15 L23 9 V28 Q23 29 22 29 H2 Q1 29 1 28 V2 Q1 1 2 1 Z" fill="#f3f3f3" stroke="#e2e2e2" stroke-width="1"/><path d="M15 1 V9 H23" fill="#e8e8e8"/><path d="M11.5 3 V11 M8 14 L12 12 L16 14" stroke="#a8a8a8" stroke-width="1.4" fill="none"/><rect x="6.5" y="15.5" width="10" height="3" fill="#9c9c9c"/><rect x="3" y="24" width="17" height="1.5" fill="#e6e6e6"/></svg>
<div class="t" style="left:185px;top:26.77px;font-size:26px;line-height:29.04px;color:#1d1d1d;letter-spacing:0.32px;">alvin-mat…nsplash.jpg</div>
<svg class="b" style="left:490px;top:27px;" width="28" height="28" viewBox="0 0 28 28"><path d="M13.5 1.5 L16.6 9.9 L25.6 10.2 L18.5 15.8 L21.1 24.5 L13.5 19.4 L5.9 24.5 L8.5 15.8 L1.4 10.2 L10.4 9.9 Z" fill="none" stroke="#8a8a8a" stroke-width="1.9" stroke-linejoin="round"/><path d="M13.5 1.5 L10.4 9.9 L1.4 10.2 L8.5 15.8 L5.9 24.5 L13.5 19.4 Z" fill="#8a8a8a"/></svg>
<div class="t" style="left:531px;top:26.77px;font-size:26px;line-height:29.04px;color:#7c7c7c;letter-spacing:0px;">Average</div>
<div class="t" style="left:753px;top:26.77px;font-size:26px;line-height:29.04px;color:#7c7c7c;letter-spacing:0.66px;">10 Sep 2024 at 00:37:35</div>
<div class="t" style="right:122px;top:27.40px;font-size:25.3px;line-height:28.26px;color:#7c7c7c;">1,2 MB</div>
<div class="t" style="left:1317px;top:27.22px;font-size:25.5px;line-height:28.48px;color:#7c7c7c;letter-spacing:0px;">JPEG image</div>
<div class="b" style="left:0;top:65px;width:1418px;height:48px;background:#f4f4f4;"></div>
<div class="b" style="left:34px;top:74px;width:28px;height:28px;box-sizing:border-box;border-radius:7px;background:#fff;border:1.6px solid #d2d2d2;"></div>
<svg class="b" style="left:144px;top:73px;" width="24" height="30" viewBox="0 0 24 30"><path d="M2 1 H15 L23 9 V28 Q23 29 22 29 H2 Q1 29 1 28 V2 Q1 1 2 1 Z" fill="#f3f3f3" stroke="#e2e2e2" stroke-width="1"/><path d="M15 1 V9 H23" fill="#e8e8e8"/><path d="M11.5 3 V11 M8 14 L12 12 L16 14" stroke="#a8a8a8" stroke-width="1.4" fill="none"/><rect x="6.5" y="15.5" width="10" height="3" fill="#9c9c9c"/><rect x="3" y="24" width="17" height="1.5" fill="#e6e6e6"/></svg>
<div class="t" style="left:185px;top:74.77px;font-size:26px;line-height:29.04px;color:#1d1d1d;letter-spacing:0.32px;">anantha-k…nsplash.jpg</div>
<svg class="b" style="left:490px;top:75px;" width="28" height="28" viewBox="0 0 28 28"><path d="M13.5 1.5 L16.6 9.9 L25.6 10.2 L18.5 15.8 L21.1 24.5 L13.5 19.4 L5.9 24.5 L8.5 15.8 L1.4 10.2 L10.4 9.9 Z" fill="none" stroke="#8a8a8a" stroke-width="1.9" stroke-linejoin="round"/><path d="M13.5 1.5 L10.4 9.9 L1.4 10.2 L8.5 15.8 L5.9 24.5 L13.5 19.4 Z" fill="#8a8a8a"/></svg>
<div class="t" style="left:531px;top:74.77px;font-size:26px;line-height:29.04px;color:#7c7c7c;letter-spacing:0px;">Average</div>
<div class="t" style="left:753px;top:74.77px;font-size:26px;line-height:29.04px;color:#7c7c7c;letter-spacing:0.66px;">10 Sep 2024 at 00:37:46</div>
<div class="t" style="right:122px;top:75.40px;font-size:25.3px;line-height:28.26px;color:#7c7c7c;">1,6 MB</div>
<div class="t" style="left:1317px;top:75.22px;font-size:25.5px;line-height:28.48px;color:#7c7c7c;letter-spacing:0px;">JPEG image</div>
<div class="b" style="left:0;top:113px;width:1418px;height:48px;background:#ffffff;"></div>
<div class="b" style="left:34px;top:122px;width:28px;height:28px;box-sizing:border-box;border-radius:7px;background:#fff;border:1.6px solid #d2d2d2;"></div>
<svg class="b" style="left:144px;top:121px;" width="24" height="30" viewBox="0 0 24 30"><path d="M2 1 H15 L23 9 V28 Q23 29 22 29 H2 Q1 29 1 28 V2 Q1 1 2 1 Z" fill="#f3f3f3" stroke="#e2e2e2" stroke-width="1"/><path d="M15 1 V9 H23" fill="#e8e8e8"/><path d="M11.5 3 V11 M8 14 L12 12 L16 14" stroke="#a8a8a8" stroke-width="1.4" fill="none"/><rect x="6.5" y="15.5" width="10" height="3" fill="#9c9c9c"/><rect x="3" y="24" width="17" height="1.5" fill="#e6e6e6"/></svg>
<div class="t" style="left:185px;top:122.77px;font-size:26px;line-height:29.04px;color:#1d1d1d;letter-spacing:0.32px;">bernhard-…nsplash.jpg</div>
<svg class="b" style="left:490px;top:123px;" width="28" height="28" viewBox="0 0 28 28"><path d="M13.5 1.5 L16.6 9.9 L25.6 10.2 L18.5 15.8 L21.1 24.5 L13.5 19.4 L5.9 24.5 L8.5 15.8 L1.4 10.2 L10.4 9.9 Z" fill="none" stroke="#8a8a8a" stroke-width="1.9" stroke-linejoin="round"/><path d="M13.5 1.5 L10.4 9.9 L1.4 10.2 L8.5 15.8 L5.9 24.5 L13.5 19.4 Z" fill="#8a8a8a"/></svg>
<div class="t" style="left:531px;top:122.77px;font-size:26px;line-height:29.04px;color:#7c7c7c;letter-spacing:0px;">Average</div>
<div class="t" style="left:753px;top:122.77px;font-size:26px;line-height:29.04px;color:#7c7c7c;letter-spacing:0.66px;">10 Sep 2024 at 00:37:32</div>
<div class="t" style="right:122px;top:123.40px;font-size:25.3px;line-height:28.26px;color:#7c7c7c;">2,7 MB</div>
<div class="t" style="left:1317px;top:123.22px;font-size:25.5px;line-height:28.48px;color:#7c7c7c;letter-spacing:0px;">JPEG image</div>
<div class="b" style="left:0;top:161px;width:1418px;height:48px;background:#f4f4f4;"></div>
<div class="b" style="left:34px;top:170px;width:28px;height:28px;box-sizing:border-box;border-radius:7px;background:#fff;border:1.6px solid #d2d2d2;"></div>
<svg class="b" style="left:144px;top:169px;" width="24" height="30" viewBox="0 0 24 30"><path d="M2 1 H15 L23 9 V28 Q23 29 22 29 H2 Q1 29 1 28 V2 Q1 1 2 1 Z" fill="#f3f3f3" stroke="#e2e2e2" stroke-width="1"/><path d="M15 1 V9 H23" fill="#e8e8e8"/><path d="M11.5 3 V11 M8 14 L12 12 L16 14" stroke="#a8a8a8" stroke-width="1.4" fill="none"/><rect x="6.5" y="15.5" width="10" height="3" fill="#9c9c9c"/><rect x="3" y="24" width="17" height="1.5" fill="#e6e6e6"/></svg>
<div class="t" style="left:185px;top:170.77px;font-size:26px;line-height:29.04px;color:#1d1d1d;letter-spacing:0.32px;">edgar-info…splash.jpg</div>
<svg class="b" style="left:490px;top:171px;" width="28" height="28" viewBox="0 0 28 28"><path d="M13.5 1.5 L16.6 9.9 L25.6 10.2 L18.5 15.8 L21.1 24.5 L13.5 19.4 L5.9 24.5 L8.5 15.8 L1.4 10.2 L10.4 9.9 Z" fill="none" stroke="#8a8a8a" stroke-width="1.9" stroke-linejoin="round"/><path d="M13.5 1.5 L10.4 9.9 L1.4 10.2 L8.5 15.8 L5.9 24.5 L13.5 19.4 Z" fill="#8a8a8a"/></svg>
<div class="t" style="left:531px;top:170.77px;font-size:26px;line-height:29.04px;color:#7c7c7c;letter-spacing:0px;">Average</div>
<div class="t" style="left:753px;top:170.77px;font-size:26px;line-height:29.04px;color:#7c7c7c;letter-spacing:0.66px;">10 Sep 2024 at 00:36:53</div>
<div class="t" style="right:122px;top:171.40px;font-size:25.3px;line-height:28.26px;color:#7c7c7c;">1,9 MB</div>
<div class="t" style="left:1317px;top:171.22px;font-size:25.5px;line-height:28.48px;color:#7c7c7c;letter-spacing:0px;">JPEG image</div>
<div class="b" style="left:0;top:209px;width:1418px;height:48px;background:#ffffff;"></div>
<div class="b" style="left:34px;top:218px;width:28px;height:28px;box-sizing:border-box;border-radius:7px;background:#fff;border:1.6px solid #d2d2d2;"></div>
<svg class="b" style="left:144px;top:217px;" width="24" height="30" viewBox="0 0 24 30"><path d="M2 1 H15 L23 9 V28 Q23 29 22 29 H2 Q1 29 1 28 V2 Q1 1 2 1 Z" fill="#f3f3f3" stroke="#e2e2e2" stroke-width="1"/><path d="M15 1 V9 H23" fill="#e8e8e8"/><path d="M11.5 3 V11 M8 14 L12 12 L16 14" stroke="#a8a8a8" stroke-width="1.4" fill="none"/><rect x="6.5" y="15.5" width="10" height="3" fill="#9c9c9c"/><rect x="3" y="24" width="17" height="1.5" fill="#e6e6e6"/></svg>
<div class="t" style="left:185px;top:218.77px;font-size:26px;line-height:29.04px;color:#1d1d1d;letter-spacing:0.32px;">edgar-info…splash.jpg</div>
<svg class="b" style="left:490px;top:219px;" width="28" height="28" viewBox="0 0 28 28"><path d="M13.5 1.5 L16.6 9.9 L25.6 10.2 L18.5 15.8 L21.1 24.5 L13.5 19.4 L5.9 24.5 L8.5 15.8 L1.4 10.2 L10.4 9.9 Z" fill="none" stroke="#8a8a8a" stroke-width="1.9" stroke-linejoin="round"/><path d="M13.5 1.5 L10.4 9.9 L1.4 10.2 L8.5 15.8 L5.9 24.5 L13.5 19.4 Z" fill="#8a8a8a"/></svg>
<div class="t" style="left:531px;top:218.77px;font-size:26px;line-height:29.04px;color:#7c7c7c;letter-spacing:0px;">Average</div>
<div class="t" style="left:753px;top:218.77px;font-size:26px;line-height:29.04px;color:#7c7c7c;letter-spacing:0.66px;">10 Sep 2024 at 00:37:05</div>
<div class="t" style="right:122px;top:219.40px;font-size:25.3px;line-height:28.26px;color:#7c7c7c;">1,3 MB</div>
<div class="t" style="left:1317px;top:219.22px;font-size:25.5px;line-height:28.48px;color:#7c7c7c;letter-spacing:0px;">JPEG image</div>
<div class="b" style="left:0;top:257px;width:1418px;height:48px;background:#f4f4f4;"></div>
<div class="b" style="left:34px;top:266px;width:28px;height:28px;box-sizing:border-box;border-radius:7px;background:#fff;border:1.6px solid #d2d2d2;"></div>
<svg class="b" style="left:144px;top:265px;" width="24" height="30" viewBox="0 0 24 30"><path d="M2 1 H15 L23 9 V28 Q23 29 22 29 H2 Q1 29 1 28 V2 Q1 1 2 1 Z" fill="#f3f3f3" stroke="#e2e2e2" stroke-width="1"/><path d="M15 1 V9 H23" fill="#e8e8e8"/><path d="M11.5 3 V11 M8 14 L12 12 L16 14" stroke="#a8a8a8" stroke-width="1.4" fill="none"/><rect x="6.5" y="15.5" width="10" height="3" fill="#9c9c9c"/><rect x="3" y="24" width="17" height="1.5" fill="#e6e6e6"/></svg>
<div class="t" style="left:185px;top:266.77px;font-size:26px;line-height:29.04px;color:#1d1d1d;letter-spacing:0.32px;">janis-dzen…splash.jpg</div>
<svg class="b" style="left:490px;top:267px;" width="28" height="28" viewBox="0 0 28 28"><path d="M13.5 1.5 L16.6 9.9 L25.6 10.2 L18.5 15.8 L21.1 24.5 L13.5 19.4 L5.9 24.5 L8.5 15.8 L1.4 10.2 L10.4 9.9 Z" fill="none" stroke="#8a8a8a" stroke-width="1.9" stroke-linejoin="round"/><path d="M13.5 1.5 L10.4 9.9 L1.4 10.2 L8.5 15.8 L5.9 24.5 L13.5 19.4 Z" fill="#8a8a8a"/></svg>
<div class="t" style="left:531px;top:266.77px;font-size:26px;line-height:29.04px;color:#7c7c7c;letter-spacing:0px;">Average</div>
<div class="t" style="left:753px;top:266.77px;font-size:26px;line-height:29.04px;color:#7c7c7c;letter-spacing:0.66px;">10 Sep 2024 at 00:36:50</div>
<div class="t" style="right:122px;top:267.40px;font-size:25.3px;line-height:28.26px;color:#7c7c7c;">3,4 MB</div>
<div class="t" style="left:1317px;top:267.22px;font-size:25.5px;line-height:28.48px;color:#7c7c7c;letter-spacing:0px;">JPEG image</div>
<div class="b" style="left:0;top:305px;width:1418px;height:48px;background:#ffffff;"></div>
<div class="b" style="left:34px;top:314px;width:28px;height:28px;box-sizing:border-box;border-radius:7px;background:#fff;border:1.6px solid #d2d2d2;"></div>
<svg class="b" style="left:144px;top:313px;" width="24" height="30" viewBox="0 0 24 30"><path d="M2 1 H15 L23 9 V28 Q23 29 22 29 H2 Q1 29 1 28 V2 Q1 1 2 1 Z" fill="#f3f3f3" stroke="#e2e2e2" stroke-width="1"/><path d="M15 1 V9 H23" fill="#e8e8e8"/><path d="M11.5 3 V11 M8 14 L12 12 L16 14" stroke="#a8a8a8" stroke-width="1.4" fill="none"/><rect x="6.5" y="15.5" width="10" height="3" fill="#9c9c9c"/><rect x="3" y="24" width="17" height="1.5" fill="#e6e6e6"/></svg>
<div class="t" style="left:185px;top:314.77px;font-size:26px;line-height:29.04px;color:#1d1d1d;letter-spacing:0.32px;">janis-dzen…splash.jpg</div>
<svg class="b" style="left:490px;top:315px;" width="28" height="28" viewBox="0 0 28 28"><path d="M13.5 1.5 L16.6 9.9 L25.6 10.2 L18.5 15.8 L21.1 24.5 L13.5 19.4 L5.9 24.5 L8.5 15.8 L1.4 10.2 L10.4 9.9 Z" fill="none" stroke="#8a8a8a" stroke-width="1.9" stroke-linejoin="round"/><path d="M13.5 1.5 L10.4 9.9 L1.4 10.2 L8.5 15.8 L5.9 24.5 L13.5 19.4 Z" fill="#8a8a8a"/></svg>
<div class="t" style="left:531px;top:314.77px;font-size:26px;line-height:29.04px;color:#7c7c7c;letter-spacing:0px;">Average</div>
<div class="t" style="left:753px;top:314.77px;font-size:26px;line-height:29.04px;color:#7c7c7c;letter-spacing:0.66px;">10 Sep 2024 at 00:37:41</div>
<div class="t" style="right:122px;top:315.40px;font-size:25.3px;line-height:28.26px;color:#7c7c7c;">3,2 MB</div>
<div class="t" style="left:1317px;top:315.22px;font-size:25.5px;line-height:28.48px;color:#7c7c7c;letter-spacing:0px;">JPEG image</div>
<div class="b" style="left:0;top:353px;width:1418px;height:48px;background:#f4f4f4;"></div>
<div class="b" style="left:34px;top:362px;width:28px;height:28px;box-sizing:border-box;border-radius:7px;background:#fff;border:1.6px solid #d2d2d2;"></div>
<svg class="b" style="left:144px;top:361px;" width="24" height="30" viewBox="0 0 24 30"><path d="M2 1 H15 L23 9 V28 Q23 29 22 29 H2 Q1 29 1 28 V2 Q1 1 2 1 Z" fill="#f3f3f3" stroke="#e2e2e2" stroke-width="1"/><path d="M15 1 V9 H23" fill="#e8e8e8"/><path d="M11.5 3 V11 M8 14 L12 12 L16 14" stroke="#a8a8a8" stroke-width="1.4" fill="none"/><rect x="6.5" y="15.5" width="10" height="3" fill="#9c9c9c"/><rect x="3" y="24" width="17" height="1.5" fill="#e6e6e6"/></svg>
<div class="t" style="left:185px;top:362.77px;font-size:26px;line-height:29.04px;color:#1d1d1d;letter-spacing:0.32px;">janis-dzen…splash.jpg</div>
<svg class="b" style="left:490px;top:363px;" width="28" height="28" viewBox="0 0 28 28"><path d="M13.5 1.5 L16.6 9.9 L25.6 10.2 L18.5 15.8 L21.1 24.5 L13.5 19.4 L5.9 24.5 L8.5 15.8 L1.4 10.2 L10.4 9.9 Z" fill="none" stroke="#8a8a8a" stroke-width="1.9" stroke-linejoin="round"/><path d="M13.5 1.5 L10.4 9.9 L1.4 10.2 L8.5 15.8 L5.9 24.5 L13.5 19.4 Z" fill="#8a8a8a"/></svg>
<div class="t" style="left:531px;top:362.77px;font-size:26px;line-height:29.04px;color:#7c7c7c;letter-spacing:0px;">Average</div>
<div class="t" style="left:753px;top:362.77px;font-size:26px;line-height:29.04px;color:#7c7c7c;letter-spacing:0.66px;">10 Sep 2024 at 00:37:26</div>
<div class="t" style="right:122px;top:363.40px;font-size:25.3px;line-height:28.26px;color:#7c7c7c;">2,9 MB</div>
<div class="t" style="left:1317px;top:363.22px;font-size:25.5px;line-height:28.48px;color:#7c7c7c;letter-spacing:0px;">JPEG image</div>
<div class="b" style="left:0;top:401px;width:1418px;height:48px;background:#ffffff;"></div>
<div class="b" style="left:34px;top:410px;width:28px;height:28px;box-sizing:border-box;border-radius:7px;background:#fff;border:1.6px solid #d2d2d2;"></div>
<svg class="b" style="left:144px;top:409px;" width="24" height="30" viewBox="0 0 24 30"><path d="M2 1 H15 L23 9 V28 Q23 29 22 29 H2 Q1 29 1 28 V2 Q1 1 2 1 Z" fill="#f3f3f3" stroke="#e2e2e2" stroke-width="1"/><path d="M15 1 V9 H23" fill="#e8e8e8"/><path d="M11.5 3 V11 M8 14 L12 12 L16 14" stroke="#a8a8a8" stroke-width="1.4" fill="none"/><rect x="6.5" y="15.5" width="10" height="3" fill="#9c9c9c"/><rect x="3" y="24" width="17" height="1.5" fill="#e6e6e6"/></svg>
<div class="t" style="left:185px;top:410.77px;font-size:26px;line-height:29.04px;color:#1d1d1d;letter-spacing:0.32px;">jasper-gri…nsplash.jpg</div>
<svg class="b" style="left:490px;top:411px;" width="28" height="28" viewBox="0 0 28 28"><path d="M13.5 1.5 L16.6 9.9 L25.6 10.2 L18.5 15.8 L21.1 24.5 L13.5 19.4 L5.9 24.5 L8.5 15.8 L1.4 10.2 L10.4 9.9 Z" fill="none" stroke="#8a8a8a" stroke-width="1.9" stroke-linejoin="round"/><path d="M13.5 1.5 L10.4 9.9 L1.4 10.2 L8.5 15.8 L5.9 24.5 L13.5 19.4 Z" fill="#8a8a8a"/></svg>
<div class="t" style="left:531px;top:410.77px;font-size:26px;line-height:29.04px;color:#7c7c7c;letter-spacing:0px;">Average</div>
<div class="t" style="left:753px;top:410.77px;font-size:26px;line-height:29.04px;color:#7c7c7c;letter-spacing:0.66px;">10 Sep 2024 at 00:37:17</div>
<div class="t" style="right:122px;top:411.40px;font-size:25.3px;line-height:28.26px;color:#7c7c7c;">3,7 MB</div>
<div class="t" style="left:1317px;top:411.22px;font-size:25.5px;line-height:28.48px;color:#7c7c7c;letter-spacing:0px;">JPEG image</div>
<div class="b" style="left:0;top:449px;width:1418px;height:48px;background:#0a50da;"></div>
<div class="b" style="left:34px;top:458px;width:28px;height:28px;border-radius:7px;background:#fff;"></div>
<svg class="b" style="left:144px;top:457px;" width="24" height="30" viewBox="0 0 24 30"><defs><linearGradient id="fsel" x1="0" y1="0" x2="1" y2="1"><stop offset="0" stop-color="#fbe9dc"/><stop offset="0.5" stop-color="#f6f2ea"/><stop offset="1" stop-color="#e8eef8"/></linearGradient></defs><path d="M2 1 H15 L23 9 V28 Q23 29 22 29 H2 Q1 29 1 28 V2 Q1 1 2 1 Z" fill="url(#fsel)"/><path d="M15 1 V9 H23" fill="#e4e8f0"/><path d="M11.5 3 V11 M8 14 L12 12 L16 14" stroke="#b0a8a0" stroke-width="1.3" fill="none"/><rect x="6.5" y="15.5" width="10" height="3" fill="#a8a4a0"/></svg>
<div class="t" style="left:185px;top:458.77px;font-size:26px;line-height:29.04px;color:#fff;letter-spacing:0.32px;">jefferson-…nsplash.jpg</div>
<svg class="b" style="left:490px;top:459px;" width="28" height="28" viewBox="0 0 28 28"><path d="M13.5 1.5 L16.6 9.9 L25.6 10.2 L18.5 15.8 L21.1 24.5 L13.5 19.4 L5.9 24.5 L8.5 15.8 L1.4 10.2 L10.4 9.9 Z" fill="none" stroke="#fff" stroke-width="1.9" stroke-linejoin="round"/><path d="M13.5 1.5 L10.4 9.9 L1.4 10.2 L8.5 15.8 L5.9 24.5 L13.5 19.4 Z" fill="#fff"/></svg>
<div class="t" style="left:531px;top:458.77px;font-size:26px;line-height:29.04px;color:#fff;letter-spacing:0px;">Average</div>
<div class="t" style="left:753px;top:458.77px;font-size:26px;line-height:29.04px;color:#fff;letter-spacing:0.66px;">10 Sep 2024 at 00:37:56</div>
<div class="t" style="right:122px;top:459.40px;font-size:25.3px;line-height:28.26px;color:#fff;">1,5 MB</div>
<div class="t" style="left:1317px;top:459.22px;font-size:25.5px;line-height:28.48px;color:#fff;letter-spacing:0px;">JPEG image</div>
<div class="b" style="left:0;top:497px;width:1418px;height:48px;background:#ffffff;"></div>
<div class="b" style="left:34px;top:506px;width:28px;height:28px;box-sizing:border-box;border-radius:7px;background:#fff;border:1.6px solid #d2d2d2;"></div>
<svg class="b" style="left:144px;top:505px;" width="24" height="30" viewBox="0 0 24 30"><path d="M2 1 H15 L23 9 V28 Q23 29 22 29 H2 Q1 29 1 28 V2 Q1 1 2 1 Z" fill="#f3f3f3" stroke="#e2e2e2" stroke-width="1"/><path d="M15 1 V9 H23" fill="#e8e8e8"/><path d="M11.5 3 V11 M8 14 L12 12 L16 14" stroke="#a8a8a8" stroke-width="1.4" fill="none"/><rect x="6.5" y="15.5" width="10" height="3" fill="#9c9c9c"/><rect x="3" y="24" width="17" height="1.5" fill="#e6e6e6"/></svg>
<div class="t" style="left:185px;top:506.77px;font-size:26px;line-height:29.04px;color:#1d1d1d;letter-spacing:0.32px;">karsten-wi…splash.jpg</div>
<svg class="b" style="left:490px;top:507px;" width="28" height="28" viewBox="0 0 28 28"><path d="M13.5 1.5 L16.6 9.9 L25.6 10.2 L18.5 15.8 L21.1 24.5 L13.5 19.4 L5.9 24.5 L8.5 15.8 L1.4 10.2 L10.4 9.9 Z" fill="none" stroke="#8a8a8a" stroke-width="1.9" stroke-linejoin="round"/><path d="M13.5 1.5 L10.4 9.9 L1.4 10.2 L8.5 15.8 L5.9 24.5 L13.5 19.4 Z" fill="#8a8a8a"/></svg>
<div class="t" style="left:531px;top:506.77px;font-size:26px;line-height:29.04px;color:#7c7c7c;letter-spacing:0px;">Average</div>
<div class="t" style="left:753px;top:506.77px;font-size:26px;line-height:29.04px;color:#7c7c7c;letter-spacing:0.66px;">10 Sep 2024 at 00:37:10</div>
<div class="t" style="right:122px;top:507.40px;font-size:25.3px;line-height:28.26px;color:#7c7c7c;">7,6 MB</div>
<div class="t" style="left:1317px;top:507.22px;font-size:25.5px;line-height:28.48px;color:#7c7c7c;letter-spacing:0px;">JPEG image</div>
<div class="b" style="left:0;top:545px;width:1418px;height:48px;background:#f4f4f4;"></div>
<div class="b" style="left:34px;top:554px;width:28px;height:28px;box-sizing:border-box;border-radius:7px;background:#fff;border:1.6px solid #d2d2d2;"></div>
<svg class="b" style="left:144px;top:553px;" width="24" height="30" viewBox="0 0 24 30"><path d="M2 1 H15 L23 9 V28 Q23 29 22 29 H2 Q1 29 1 28 V2 Q1 1 2 1 Z" fill="#f3f3f3" stroke="#e2e2e2" stroke-width="1"/><path d="M15 1 V9 H23" fill="#e8e8e8"/><path d="M11.5 3 V11 M8 14 L12 12 L16 14" stroke="#a8a8a8" stroke-width="1.4" fill="none"/><rect x="6.5" y="15.5" width="10" height="3" fill="#9c9c9c"/><rect x="3" y="24" width="17" height="1.5" fill="#e6e6e6"/></svg>
<div class="t" style="left:185px;top:554.77px;font-size:26px;line-height:29.04px;color:#1d1d1d;letter-spacing:0.32px;">kateryna-…nsplash.jpg</div>
<svg class="b" style="left:490px;top:555px;" width="28" height="28" viewBox="0 0 28 28"><path d="M13.5 1.5 L16.6 9.9 L25.6 10.2 L18.5 15.8 L21.1 24.5 L13.5 19.4 L5.9 24.5 L8.5 15.8 L1.4 10.2 L10.4 9.9 Z" fill="none" stroke="#8a8a8a" stroke-width="1.9" stroke-linejoin="round"/><path d="M13.5 1.5 L10.4 9.9 L1.4 10.2 L8.5 15.8 L5.9 24.5 L13.5 19.4 Z" fill="#8a8a8a"/></svg>
<div class="t" style="left:531px;top:554.77px;font-size:26px;line-height:29.04px;color:#7c7c7c;letter-spacing:0px;">Average</div>
<div class="t" style="left:753px;top:554.77px;font-size:26px;line-height:29.04px;color:#7c7c7c;letter-spacing:0.66px;">10 Sep 2024 at 00:37:54</div>
<div class="t" style="right:122px;top:555.40px;font-size:25.3px;line-height:28.26px;color:#7c7c7c;">5,1 MB</div>
<div class="t" style="left:1317px;top:555.22px;font-size:25.5px;line-height:28.48px;color:#7c7c7c;letter-spacing:0px;">JPEG image</div>
<div class="b" style="left:0;top:593px;width:1418px;height:48px;background:#ffffff;"></div>
<div class="b" style="left:34px;top:602px;width:28px;height:28px;box-sizing:border-box;border-radius:7px;background:#fff;border:1.6px solid #d2d2d2;"></div>
<svg class="b" style="left:144px;top:601px;" width="24" height="30" viewBox="0 0 24 30"><path d="M2 1 H15 L23 9 V28 Q23 29 22 29 H2 Q1 29 1 28 V2 Q1 1 2 1 Z" fill="#f3f3f3" stroke="#e2e2e2" stroke-width="1"/><path d="M15 1 V9 H23" fill="#e8e8e8"/><path d="M11.5 3 V11 M8 14 L12 12 L16 14" stroke="#a8a8a8" stroke-width="1.4" fill="none"/><rect x="6.5" y="15.5" width="10" height="3" fill="#9c9c9c"/><rect x="3" y="24" width="17" height="1.5" fill="#e6e6e6"/></svg>
<div class="t" style="left:185px;top:602.77px;font-size:26px;line-height:29.04px;color:#1d1d1d;letter-spacing:0.32px;">masood-a…nsplash.jpg</div>
<svg class="b" style="left:490px;top:603px;" width="28" height="28" viewBox="0 0 28 28"><path d="M13.5 1.5 L16.6 9.9 L25.6 10.2 L18.5 15.8 L21.1 24.5 L13.5 19.4 L5.9 24.5 L8.5 15.8 L1.4 10.2 L10.4 9.9 Z" fill="none" stroke="#8a8a8a" stroke-width="1.9" stroke-linejoin="round"/><path d="M13.5 1.5 L10.4 9.9 L1.4 10.2 L8.5 15.8 L5.9 24.5 L13.5 19.4 Z" fill="#8a8a8a"/></svg>
<div class="t" style="left:531px;top:602.77px;font-size:26px;line-height:29.04px;color:#7c7c7c;letter-spacing:0px;">Average</div>
<div class="t" style="left:753px;top:602.77px;font-size:26px;line-height:29.04px;color:#7c7c7c;letter-spacing:0.66px;">10 Sep 2024 at 00:36:55</div>
<div class="t" style="right:122px;top:603.40px;font-size:25.3px;line-height:28.26px;color:#7c7c7c;">9,4 MB</div>
<div class="t" style="left:1317px;top:603.22px;font-size:25.5px;line-height:28.48px;color:#7c7c7c;letter-spacing:0px;">JPEG image</div>
<div class="b" style="left:0;top:641px;width:1418px;height:48px;background:#f4f4f4;"></div>
<div class="b" style="left:34px;top:650px;width:28px;height:28px;box-sizing:border-box;border-radius:7px;background:#fff;border:1.6px solid #d2d2d2;"></div>
<svg class="b" style="left:144px;top:649px;" width="24" height="30" viewBox="0 0 24 30"><path d="M2 1 H15 L23 9 V28 Q23 29 22 29 H2 Q1 29 1 28 V2 Q1 1 2 1 Z" fill="#f3f3f3" stroke="#e2e2e2" stroke-width="1"/><path d="M15 1 V9 H23" fill="#e8e8e8"/><path d="M11.5 3 V11 M8 14 L12 12 L16 14" stroke="#a8a8a8" stroke-width="1.4" fill="none"/><rect x="6.5" y="15.5" width="10" height="3" fill="#9c9c9c"/><rect x="3" y="24" width="17" height="1.5" fill="#e6e6e6"/></svg>
<div class="t" style="left:185px;top:650.77px;font-size:26px;line-height:29.04px;color:#1d1d1d;letter-spacing:0.32px;">mathias-re…splash.jpg</div>
<svg class="b" style="left:490px;top:651px;" width="28" height="28" viewBox="0 0 28 28"><path d="M13.5 1.5 L16.6 9.9 L25.6 10.2 L18.5 15.8 L21.1 24.5 L13.5 19.4 L5.9 24.5 L8.5 15.8 L1.4 10.2 L10.4 9.9 Z" fill="none" stroke="#8a8a8a" stroke-width="1.9" stroke-linejoin="round"/><path d="M13.5 1.5 L10.4 9.9 L1.4 10.2 L8.5 15.8 L5.9 24.5 L13.5 19.4 Z" fill="#8a8a8a"/></svg>
<div class="t" style="left:531px;top:650.77px;font-size:26px;line-height:29.04px;color:#7c7c7c;letter-spacing:0px;">Average</div>
<div class="t" style="left:753px;top:650.77px;font-size:26px;line-height:29.04px;color:#7c7c7c;letter-spacing:0.66px;">10 Sep 2024 at 00:37:44</div>
<div class="t" style="right:122px;top:651.40px;font-size:25.3px;line-height:28.26px;color:#7c7c7c;">5,7 MB</div>
<div class="t" style="left:1317px;top:651.22px;font-size:25.5px;line-height:28.48px;color:#7c7c7c;letter-spacing:0px;">JPEG image</div>
<div class="b" style="left:0;top:689px;width:1418px;height:48px;background:#ffffff;"></div>
<div class="b" style="left:34px;top:698px;width:28px;height:28px;box-sizing:border-box;border-radius:7px;background:#fff;border:1.6px solid #d2d2d2;"></div>
<svg class="b" style="left:144px;top:697px;" width="24" height="30" viewBox="0 0 24 30"><path d="M2 1 H15 L23 9 V28 Q23 29 22 29 H2 Q1 29 1 28 V2 Q1 1 2 1 Z" fill="#f3f3f3" stroke="#e2e2e2" stroke-width="1"/><path d="M15 1 V9 H23" fill="#e8e8e8"/><path d="M11.5 3 V11 M8 14 L12 12 L16 14" stroke="#a8a8a8" stroke-width="1.4" fill="none"/><rect x="6.5" y="15.5" width="10" height="3" fill="#9c9c9c"/><rect x="3" y="24" width="17" height="1.5" fill="#e6e6e6"/></svg>
<div class="t" style="left:185px;top:698.77px;font-size:26px;line-height:29.04px;color:#1d1d1d;letter-spacing:0.32px;">naeem-ad…nsplash.jpg</div>
<svg class="b" style="left:490px;top:699px;" width="28" height="28" viewBox="0 0 28 28"><path d="M13.5 1.5 L16.6 9.9 L25.6 10.2 L18.5 15.8 L21.1 24.5 L13.5 19.4 L5.9 24.5 L8.5 15.8 L1.4 10.2 L10.4 9.9 Z" fill="none" stroke="#8a8a8a" stroke-width="1.9" stroke-linejoin="round"/><path d="M13.5 1.5 L10.4 9.9 L1.4 10.2 L8.5 15.8 L5.9 24.5 L13.5 19.4 Z" fill="#8a8a8a"/></svg>
<div class="t" style="left:531px;top:698.77px;font-size:26px;line-height:29.04px;color:#7c7c7c;letter-spacing:0px;">Average</div>
<div class="t" style="left:753px;top:698.77px;font-size:26px;line-height:29.04px;color:#7c7c7c;letter-spacing:0.66px;">10 Sep 2024 at 00:37:13</div>
<div class="t" style="right:122px;top:699.40px;font-size:25.3px;line-height:28.26px;color:#7c7c7c;">2,8 MB</div>
<div class="t" style="left:1317px;top:699.22px;font-size:25.5px;line-height:28.48px;color:#7c7c7c;letter-spacing:0px;">JPEG image</div>
<div class="b" style="left:0;top:737px;width:1418px;height:48px;background:#f4f4f4;"></div>
<div class="b" style="left:34px;top:746px;width:28px;height:28px;box-sizing:border-box;border-radius:7px;background:#fff;border:1.6px solid #d2d2d2;"></div>
<svg class="b" style="left:144px;top:745px;" width="24" height="30" viewBox="0 0 24 30"><path d="M2 1 H15 L23 9 V28 Q23 29 22 29 H2 Q1 29 1 28 V2 Q1 1 2 1 Z" fill="#f3f3f3" stroke="#e2e2e2" stroke-width="1"/><path d="M15 1 V9 H23" fill="#e8e8e8"/><path d="M11.5 3 V11 M8 14 L12 12 L16 14" stroke="#a8a8a8" stroke-width="1.4" fill="none"/><rect x="6.5" y="15.5" width="10" height="3" fill="#9c9c9c"/><rect x="3" y="24" width="17" height="1.5" fill="#e6e6e6"/></svg>
<div class="t" style="left:185px;top:746.77px;font-size:26px;line-height:29.04px;color:#1d1d1d;letter-spacing:0.32px;">omar-ram-…splash.jpg</div>
<svg class="b" style="left:490px;top:747px;" width="28" height="28" viewBox="0 0 28 28"><path d="M13.5 1.5 L16.6 9.9 L25.6 10.2 L18.5 15.8 L21.1 24.5 L13.5 19.4 L5.9 24.5 L8.5 15.8 L1.4 10.2 L10.4 9.9 Z" fill="none" stroke="#8a8a8a" stroke-width="1.9" stroke-linejoin="round"/><path d="M13.5 1.5 L10.4 9.9 L1.4 10.2 L8.5 15.8 L5.9 24.5 L13.5 19.4 Z" fill="#8a8a8a"/></svg>
<div class="t" style="left:531px;top:746.77px;font-size:26px;line-height:29.04px;color:#7c7c7c;letter-spacing:0px;">Average</div>
<div class="t" style="left:753px;top:746.77px;font-size:26px;line-height:29.04px;color:#7c7c7c;letter-spacing:0.66px;">10 Sep 2024 at 00:37:21</div>
<div class="t" style="right:122px;top:747.40px;font-size:25.3px;line-height:28.26px;color:#7c7c7c;">4,6 MB</div>
<div class="t" style="left:1317px;top:747.22px;font-size:25.5px;line-height:28.48px;color:#7c7c7c;letter-spacing:0px;">JPEG image</div>
<div class="b" style="left:0;top:785px;width:1418px;height:48px;background:#ffffff;"></div>
<div class="b" style="left:34px;top:794px;width:28px;height:28px;box-sizing:border-box;border-radius:7px;background:#fff;border:1.6px solid #d2d2d2;"></div>
<svg class="b" style="left:144px;top:793px;" width="24" height="30" viewBox="0 0 24 30"><path d="M2 1 H15 L23 9 V28 Q23 29 22 29 H2 Q1 29 1 28 V2 Q1 1 2 1 Z" fill="#f3f3f3" stroke="#e2e2e2" stroke-width="1"/><path d="M15 1 V9 H23" fill="#e8e8e8"/><path d="M11.5 3 V11 M8 14 L12 12 L16 14" stroke="#a8a8a8" stroke-width="1.4" fill="none"/><rect x="6.5" y="15.5" width="10" height="3" fill="#9c9c9c"/><rect x="3" y="24" width="17" height="1.5" fill="#e6e6e6"/></svg>
<div class="t" style="left:185px;top:794.77px;font-size:26px;line-height:29.04px;color:#1d1d1d;letter-spacing:0.32px;">philip-oro…nsplash.jpg</div>
<svg class="b" style="left:490px;top:795px;" width="28" height="28" viewBox="0 0 28 28"><path d="M13.5 1.5 L16.6 9.9 L25.6 10.2 L18.5 15.8 L21.1 24.5 L13.5 19.4 L5.9 24.5 L8.5 15.8 L1.4 10.2 L10.4 9.9 Z" fill="none" stroke="#8a8a8a" stroke-width="1.9" stroke-linejoin="round"/><path d="M13.5 1.5 L10.4 9.9 L1.4 10.2 L8.5 15.8 L5.9 24.5 L13.5 19.4 Z" fill="#8a8a8a"/></svg>
<div class="t" style="left:531px;top:794.77px;font-size:26px;line-height:29.04px;color:#7c7c7c;letter-spacing:0px;">Average</div>
<div class="t" style="left:753px;top:794.77px;font-size:26px;line-height:29.04px;color:#7c7c7c;letter-spacing:0.66px;">10 Sep 2024 at 00:36:57</div>
<div class="t" style="right:122px;top:795.40px;font-size:25.3px;line-height:28.26px;color:#7c7c7c;">1,3 MB</div>
<div class="t" style="left:1317px;top:795.22px;font-size:25.5px;line-height:28.48px;color:#7c7c7c;letter-spacing:0px;">JPEG image</div>
<div class="b" style="left:0;top:833px;width:1418px;height:48px;background:#f4f4f4;"></div>
<div class="b" style="left:34px;top:842px;width:28px;height:28px;box-sizing:border-box;border-radius:7px;background:#fff;border:1.6px solid #d2d2d2;"></div>
<svg class="b" style="left:144px;top:841px;" width="24" height="30" viewBox="0 0 24 30"><path d="M2 1 H15 L23 9 V28 Q23 29 22 29 H2 Q1 29 1 28 V2 Q1 1 2 1 Z" fill="#f3f3f3" stroke="#e2e2e2" stroke-width="1"/><path d="M15 1 V9 H23" fill="#e8e8e8"/><path d="M11.5 3 V11 M8 14 L12 12 L16 14" stroke="#a8a8a8" stroke-width="1.4" fill="none"/><rect x="6.5" y="15.5" width="10" height="3" fill="#9c9c9c"/><rect x="3" y="24" width="17" height="1.5" fill="#e6e6e6"/></svg>
<div class="t" style="left:185px;top:842.77px;font-size:26px;line-height:29.04px;color:#1d1d1d;letter-spacing:0.32px;">priscilla-d…nsplash.jpg</div>
<svg class="b" style="left:490px;top:843px;" width="28" height="28" viewBox="0 0 28 28"><path d="M13.5 1.5 L16.6 9.9 L25.6 10.2 L18.5 15.8 L21.1 24.5 L13.5 19.4 L5.9 24.5 L8.5 15.8 L1.4 10.2 L10.4 9.9 Z" fill="none" stroke="#8a8a8a" stroke-width="1.9" stroke-linejoin="round"/><path d="M13.5 1.5 L10.4 9.9 L1.4 10.2 L8.5 15.8 L5.9 24.5 L13.5 19.4 Z" fill="#8a8a8a"/></svg>
<div class="t" style="left:531px;top:842.77px;font-size:26px;line-height:29.04px;color:#7c7c7c;letter-spacing:0px;">Average</div>
<div class="t" style="left:753px;top:842.77px;font-size:26px;line-height:29.04px;color:#7c7c7c;letter-spacing:0.66px;">10 Sep 2024 at 00:36:59</div>
<div class="t" style="right:122px;top:843.40px;font-size:25.3px;line-height:28.26px;color:#7c7c7c;">6,2 MB</div>
<div class="t" style="left:1317px;top:843.22px;font-size:25.5px;line-height:28.48px;color:#7c7c7c;letter-spacing:0px;">JPEG image</div>
<div class="b" style="left:0;top:881px;width:1418px;height:48px;background:#ffffff;"></div>
<div class="b" style="left:34px;top:890px;width:28px;height:28px;box-sizing:border-box;border-radius:7px;background:#fff;border:1.6px solid #d2d2d2;"></div>
<svg class="b" style="left:144px;top:889px;" width="24" height="30" viewBox="0 0 24 30"><path d="M2 1 H15 L23 9 V28 Q23 29 22 29 H2 Q1 29 1 28 V2 Q1 1 2 1 Z" fill="#f3f3f3" stroke="#e2e2e2" stroke-width="1"/><path d="M15 1 V9 H23" fill="#e8e8e8"/><path d="M11.5 3 V11 M8 14 L12 12 L16 14" stroke="#a8a8a8" stroke-width="1.4" fill="none"/><rect x="6.5" y="15.5" width="10" height="3" fill="#9c9c9c"/><rect x="3" y="24" width="17" height="1.5" fill="#e6e6e6"/></svg>
<div class="t" style="left:185px;top:890.77px;font-size:26px;line-height:29.04px;color:#1d1d1d;letter-spacing:0.32px;">samsung-…nsplash.jpg</div>
<svg class="b" style="left:490px;top:891px;" width="28" height="28" viewBox="0 0 28 28"><path d="M13.5 1.5 L16.6 9.9 L25.6 10.2 L18.5 15.8 L21.1 24.5 L13.5 19.4 L5.9 24.5 L8.5 15.8 L1.4 10.2 L10.4 9.9 Z" fill="none" stroke="#8a8a8a" stroke-width="1.9" stroke-linejoin="round"/><path d="M13.5 1.5 L10.4 9.9 L1.4 10.2 L8.5 15.8 L5.9 24.5 L13.5 19.4 Z" fill="#8a8a8a"/></svg>
<div class="t" style="left:531px;top:890.77px;font-size:26px;line-height:29.04px;color:#7c7c7c;letter-spacing:0px;">Average</div>
<div class="t" style="left:753px;top:890.77px;font-size:26px;line-height:29.04px;color:#7c7c7c;letter-spacing:0.66px;">10 Sep 2024 at 00:37:23</div>
<div class="t" style="right:122px;top:891.40px;font-size:25.3px;line-height:28.26px;color:#7c7c7c;">580 KB</div>
<div class="t" style="left:1317px;top:891.22px;font-size:25.5px;line-height:28.48px;color:#7c7c7c;letter-spacing:0px;">JPEG image</div>
<div class="b" style="left:0;top:929px;width:1418px;height:48px;background:#f4f4f4;"></div>
<div class="b" style="left:34px;top:938px;width:28px;height:28px;box-sizing:border-box;border-radius:7px;background:#fff;border:1.6px solid #d2d2d2;"></div>
<svg class="b" style="left:144px;top:937px;" width="24" height="30" viewBox="0 0 24 30"><path d="M2 1 H15 L23 9 V28 Q23 29 22 29 H2 Q1 29 1 28 V2 Q1 1 2 1 Z" fill="#f3f3f3" stroke="#e2e2e2" stroke-width="1"/><path d="M15 1 V9 H23" fill="#e8e8e8"/><path d="M11.5 3 V11 M8 14 L12 12 L16 14" stroke="#a8a8a8" stroke-width="1.4" fill="none"/><rect x="6.5" y="15.5" width="10" height="3" fill="#9c9c9c"/><rect x="3" y="24" width="17" height="1.5" fill="#e6e6e6"/></svg>
<div class="t" style="left:185px;top:938.77px;font-size:26px;line-height:29.04px;color:#1d1d1d;letter-spacing:0.32px;">samsung-…nsplash.jpg</div>
<svg class="b" style="left:490px;top:939px;" width="28" height="28" viewBox="0 0 28 28"><path d="M13.5 1.5 L16.6 9.9 L25.6 10.2 L18.5 15.8 L21.1 24.5 L13.5 19.4 L5.9 24.5 L8.5 15.8 L1.4 10.2 L10.4 9.9 Z" fill="none" stroke="#8a8a8a" stroke-width="1.9" stroke-linejoin="round"/><path d="M13.5 1.5 L10.4 9.9 L1.4 10.2 L8.5 15.8 L5.9 24.5 L13.5 19.4 Z" fill="#8a8a8a"/></svg>
<div class="t" style="left:531px;top:938.77px;font-size:26px;line-height:29.04px;color:#7c7c7c;letter-spacing:0px;">Average</div>
<div class="t" style="left:753px;top:938.77px;font-size:26px;line-height:29.04px;color:#7c7c7c;letter-spacing:0.66px;">10 Sep 2024 at 00:37:04</div>
<div class="t" style="right:122px;top:939.40px;font-size:25.3px;line-height:28.26px;color:#7c7c7c;">14 MB</div>
<div class="t" style="left:1317px;top:939.22px;font-size:25.5px;line-height:28.48px;color:#7c7c7c;letter-spacing:0px;">JPEG image</div>
<div class="b" style="left:0;top:0;width:1418px;height:56px;background:rgba(255,255,255,0.99);"></div>
<div class="b" style="left:0;top:55px;width:1418px;height:2px;background:#e3e3e3;"></div>
</div>
<div class="b" style="left:605px;top:488px;width:28px;height:28px;box-sizing:border-box;border-radius:7px;background:#fff;border:1.6px solid #d2d2d2;"></div>
<div class="b" style="left:655px;top:489px;width:1.5px;height:30px;background:#e6e6e6;"></div>
<div class="b" style="left:1061px;top:489px;width:1.5px;height:30px;background:#e6e6e6;"></div>
<div class="b" style="left:1324px;top:489px;width:1.5px;height:30px;background:#e6e6e6;"></div>
<div class="b" style="left:1686px;top:489px;width:1.5px;height:30px;background:#e6e6e6;"></div>
<div class="b" style="left:1888px;top:489px;width:1.5px;height:30px;background:#e6e6e6;"></div>
<div class="t " style="left:701.5px;top:489.53px;font-size:22.4px;line-height:25.02px;color:#1e1e1e;font-weight:bold;">Name</div>
<svg class="b" style="left:1020px;top:497px;" width="20" height="14" viewBox="0 0 20 14"><path d="M3 10 L10 3.5 L17 10" fill="none" stroke="#777" stroke-width="2" stroke-linecap="round" stroke-linejoin="round"/></svg>
<div class="t " style="left:1079px;top:489.53px;font-size:22.4px;line-height:25.02px;color:#222;letter-spacing:0.29px;">Recovery chances</div>
<div class="t " style="left:1342px;top:489.53px;font-size:22.4px;line-height:25.02px;color:#222;letter-spacing:0.65px;">Date modified</div>
<div class="t " style="left:1703.5px;top:489.53px;font-size:22.4px;line-height:25.02px;color:#222;letter-spacing:0.4px;">Size</div>
<div class="t " style="left:1905.5px;top:489.53px;font-size:22.4px;line-height:25.02px;color:#222;letter-spacing:0.4px;">Kind</div>
<div class="b" style="left:1999px;top:473px;width:1.5px;height:964px;background:#e6e6e6;"></div>
<div class="b" style="left:2000.5px;top:473px;width:499.5px;height:964px;background:#fff;"></div>
<svg class="b" style="left:2132.4px;top:514.3px;" width="233.3" height="350.5" viewBox="0 0 233.3 350.5"><defs>
<linearGradient id="sky" x1="0" y1="0" x2="0" y2="1"><stop offset="0" stop-color="#b4bec8"/><stop offset="0.6" stop-color="#c2c8d0"/><stop offset="1" stop-color="#cacdd2"/></linearGradient>
<linearGradient id="rock" x1="0" y1="0" x2="0" y2="1"><stop offset="0" stop-color="#9a6246"/><stop offset="0.45" stop-color="#a06a4c"/><stop offset="1" stop-color="#8a6448"/></linearGradient>
<linearGradient id="gnd" x1="0" y1="0" x2="1" y2="0"><stop offset="0" stop-color="#6c6a4a"/><stop offset="0.5" stop-color="#7a6a4a"/><stop offset="0.75" stop-color="#9a6a40"/><stop offset="1" stop-color="#8a5a38"/></linearGradient>
<clipPath id="win"><polygon points="9.5,64.8 233.3,19.5 233.3,244.7 155.3,253.4 68,260.7 33.3,136.2"/></clipPath>
<clipPath id="land"><polygon points="36,135.5 60,124 78,115 101.5,109.4 110,100.6 130.6,97 155.3,100.6 171.3,108.6 229.5,108.6 234,109 234,260 36,260"/></clipPath>
<filter id="soft"><feGaussianBlur stdDeviation="1.0"/></filter>
<filter id="tex" x="0" y="0" width="100%" height="100%"><feTurbulence type="fractalNoise" baseFrequency="0.09 0.16" numOctaves="3" seed="7"/><feColorMatrix type="matrix" values="0 0 0 0 0.16  0 0 0 0 0.09  0 0 0 0 0.06  0 0 0 -3 1.75"/></filter>
<filter id="tex2" x="0" y="0" width="100%" height="100%"><feTurbulence type="fractalNoise" baseFrequency="0.12" numOctaves="2" seed="3"/><feColorMatrix type="matrix" values="0 0 0 0 0.85  0 0 0 0 0.62  0 0 0 0 0.42  0 0 0 2.4 -1.35"/></filter>
</defs>
<rect width="233.3" height="350.5" fill="#0c0e10"/>
<g filter="url(#soft)">
<polygon points="0,86 20.2,139.8 15.6,141.4 0,157" fill="#a2aab2"/>
<g clip-path="url(#win)">
<rect x="0" y="0" width="234" height="260" fill="url(#sky)"/>
<g clip-path="url(#land)">
<rect x="0" y="90" width="234" height="110" fill="url(#rock)"/>
<polygon points="78,118 100,112 108,140 90,165 80,150" fill="#b27a56" opacity="0.45"/>
<polygon points="130,100 155,103 165,130 150,160 132,140" fill="#b88062" opacity="0.35"/>
<polygon points="175,112 234,112 234,140 200,150 180,135" fill="#7e4a3a" opacity="0.45"/>
<polygon points="185,150 234,155 234,165 190,162" fill="#a85a50" opacity="0.5"/>
<rect x="0" y="90" width="234" height="110" filter="url(#tex)" opacity="0.75"/>
<rect x="0" y="90" width="234" height="110" filter="url(#tex2)" opacity="0.3"/>
<polygon points="30,188 120,183 234,180 234,260 30,260" fill="url(#gnd)"/>
<polygon points="55,205 105,200 110,225 60,232" fill="#5a6040" opacity="0.6"/>
<polygon points="165,195 234,188 234,240 170,245" fill="#a86a38" opacity="0.55"/>
<polygon points="90,240 160,234 160,252 90,256" fill="#a46a46" opacity="0.6"/>
<rect x="0" y="180" width="234" height="80" filter="url(#tex)" opacity="0.7"/>
<rect x="0" y="180" width="234" height="80" filter="url(#tex2)" opacity="0.3"/>
</g>
</g>
<polygon points="68,260.7 155.3,253.4 233.3,244.7 233.3,252 70,266" fill="#10151c"/>
<rect x="0" y="294" width="175" height="20" fill="#2a2224" opacity="0.7"/>
</g></svg>
<div class="t " style="left:2044px;top:898.31px;font-size:30.6px;line-height:34.18px;color:#262626;font-weight:bold;">jefferson-see...-unsplash.jpg</div>
<div class="t " style="left:2044px;top:944.33px;font-size:25.6px;line-height:28.60px;color:#808080;">JPEG image – 1,5 MB</div>
<div class="t " style="left:2044px;top:986.42px;font-size:25.5px;line-height:28.48px;color:#808080;letter-spacing:0.9px;">Date modified</div>
<div class="t " style="left:2224px;top:986.42px;font-size:25.5px;line-height:28.48px;color:#808080;letter-spacing:0.58px;">10 Sep 2...4 at 00:37</div>
<div class="t " style="left:2044px;top:1050.61px;font-size:25.4px;line-height:28.37px;color:#262626;font-weight:bold;">Path</div>
<div class="t " style="left:2044.5px;top:1090.59px;font-size:25.2px;line-height:28.15px;color:#808080;letter-spacing:0.88px;">Deleted or lost</div>
<svg class="b" style="left:2230px;top:1101px;" width="10" height="11" viewBox="0 0 10 11"><path d="M1.5 1 L9 5.5 L1.5 10 Z" fill="#8a8a8a"/></svg>
<div class="t " style="left:2249px;top:1090.59px;font-size:25.2px;line-height:28.15px;color:#808080;letter-spacing:1.0px;">Lost partition "Part</div>
<div class="t " style="left:2052px;top:1121.79px;font-size:25.2px;line-height:28.15px;color:#808080;letter-spacing:0.6px;">3" (NTFS)</div>
<svg class="b" style="left:2181.5px;top:1133px;" width="10" height="11" viewBox="0 0 10 11"><path d="M1.5 1 L9 5.5 L1.5 10 Z" fill="#8a8a8a"/></svg>
<div class="t " style="left:2199px;top:1121.79px;font-size:25.2px;line-height:28.15px;color:#808080;letter-spacing:1.15px;">jefferson-sees-OOysm</div>
<div class="t " style="left:2044.5px;top:1154.59px;font-size:25.2px;line-height:28.15px;color:#808080;letter-spacing:0.92px;">EAw72U-unsplash.jpg</div>
<div class="t " style="left:2044px;top:1218.44px;font-size:25.7px;line-height:28.71px;color:#262626;font-weight:bold;">Recovery chances</div>
<svg class="b" style="left:2045px;top:1256px;" width="28" height="28" viewBox="0 0 28 28"><path d="M13.5 1.5 L16.6 9.9 L25.6 10.2 L18.5 15.8 L21.1 24.5 L13.5 19.4 L5.9 24.5 L8.5 15.8 L1.4 10.2 L10.4 9.9 Z" fill="none" stroke="#8a8a8a" stroke-width="1.9" stroke-linejoin="round"/><path d="M13.5 1.5 L10.4 9.9 L1.4 10.2 L8.5 15.8 L5.9 24.5 L13.5 19.4 Z" fill="#8a8a8a"/></svg>
<div class="t " style="left:2088px;top:1257.47px;font-size:26px;line-height:29.04px;color:#808080;">Average</div>
<div class="b" style="left:582px;top:1437px;width:1918px;height:1.5px;background:#e2e2e2;"></div>
<div class="b" style="left:2320px;top:1463px;width:140px;height:40px;border-radius:10px;background:linear-gradient(180deg,#2a7af8,#1566f0);"></div>
<div class="t" style="left:2320px;top:1463px;width:140px;height:40px;line-height:40px;text-align:center;font-size:26.1px;color:#fff;">Recover</div>
</div></body></html>
